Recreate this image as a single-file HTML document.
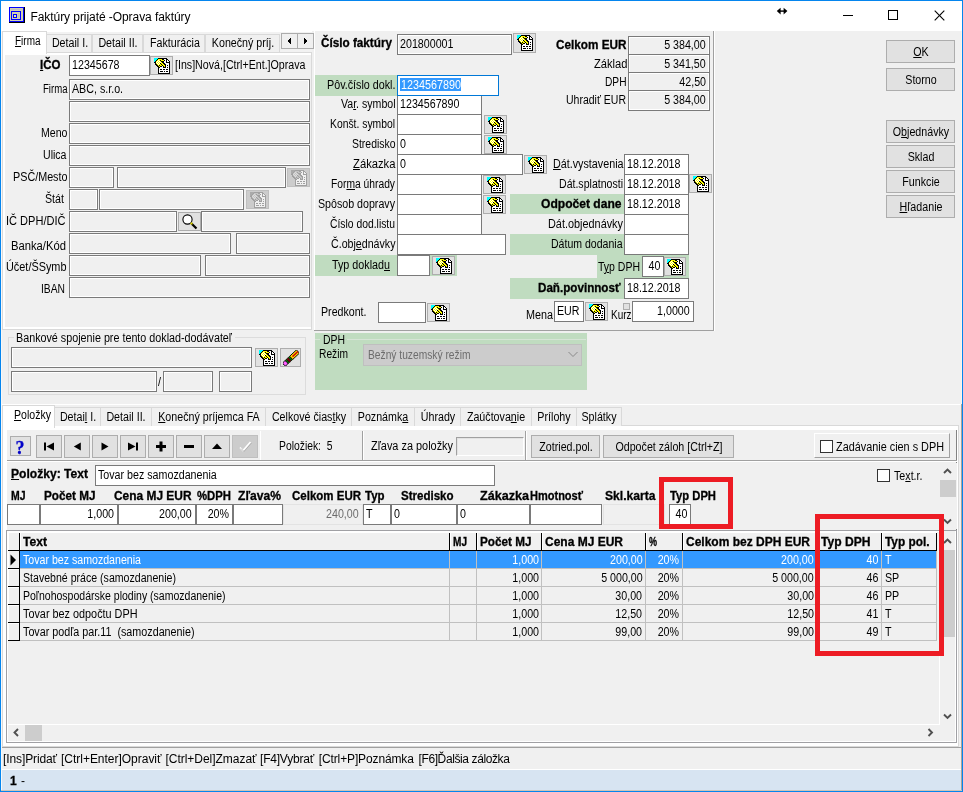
<!DOCTYPE html>
<html lang="sk"><head><meta charset="utf-8"><title>Faktúry prijaté - Oprava faktúry</title>
<style>
html,body{margin:0;padding:0;}
body{width:963px;height:792px;overflow:hidden;position:relative;background:#f0f0f0;font-family:"Liberation Sans", sans-serif;font-size:12px;color:#000;}
#w{position:absolute;left:0;top:0;width:963px;height:792px;overflow:hidden;will-change:transform;}
#w div,#w svg,#w span{position:absolute;}
.t{white-space:pre;}
u{text-decoration:underline;text-underline-offset:1px;text-decoration-thickness:1px;}
</style></head>
<body><div id="w">
<div style="left:0px;top:0px;width:963px;height:792px;background:#f0f0f0;"></div>
<div style="left:0px;top:0px;width:963px;height:31px;background:#fff;"></div>
<svg style="left:9px;top:7px" width="16" height="16" viewBox="0 0 16 16" shape-rendering="crispEdges"><rect x="0" y="0" width="16" height="16" fill="#000"/><rect x="0" y="0" width="15" height="15" fill="#0000ff"/><rect x="1" y="1" width="13" height="13" fill="#d2d2b0"/><rect x="2" y="2" width="11" height="1" fill="#c0c0c0"/><rect x="2" y="4" width="10" height="9" fill="#0000ff"/><rect x="3" y="5" width="8" height="7" fill="#d2d2b0"/><rect x="9" y="6" width="1" height="5" fill="#c0c0c0"/><rect x="4" y="7" width="4" height="4" fill="#0000ff"/><rect x="5" y="8" width="2" height="2" fill="#f0f0a0"/></svg>
<span id="t1" class="t" style="top:10px;line-height:14px;left:30.5px;letter-spacing:-0.067px;">Faktúry prijaté -Oprava faktúry</span>
<svg style="left:770px;top:0px" width="190" height="31" viewBox="0 0 190 31"><g stroke="#000" stroke-width="1" fill="none" shape-rendering="crispEdges"><line x1="73" y1="15.5" x2="83" y2="15.5"/><rect x="118.5" y="10.5" width="9" height="9"/></g><g stroke="#000" stroke-width="1.1" fill="none"><line x1="164.7" y1="10.7" x2="174.3" y2="20.3"/><line x1="174.3" y1="10.7" x2="164.7" y2="20.3"/></g><g fill="#000"><rect x="9" y="10.4" width="7" height="1.4"/><path d="M6.8 11.1 L10.6 7.8 L10.6 14.4 Z"/><path d="M17.4 11.1 L13.6 7.8 L13.6 14.4 Z"/></g></svg>
<div style="left:2px;top:31px;width:311px;height:299px;background:#fff;"></div>
<div style="left:46px;top:32px;width:268px;height:20px;background:#f2f2f2;"></div>
<div style="left:2px;top:329px;width:310px;height:1px;background:#d9d9d9;"></div>
<div style="left:311px;top:52px;width:1px;height:278px;background:#d9d9d9;"></div>
<div style="left:46px;top:52px;width:266px;height:1px;background:#d9d9d9;"></div>
<div style="left:2px;top:31px;width:1px;height:299px;background:#d9d9d9;"></div>
<div style="left:312px;top:31px;width:2px;height:300px;background:#f0f0f0;"></div>
<div style="left:46px;top:34px;width:46px;height:18px;background:#f0f0f0;border:1px solid #d9d9d9;border-bottom:none;box-sizing:border-box;"></div>
<span id="t2" class="t" style="top:36px;line-height:14px;left:-80.5px;width:300px;text-align:center;transform:scaleX(0.8900);transform-origin:center center;">Detail I.</span>
<div style="left:92px;top:34px;width:51px;height:18px;background:#f0f0f0;border:1px solid #d9d9d9;border-bottom:none;box-sizing:border-box;"></div>
<span id="t3" class="t" style="top:36px;line-height:14px;left:-32.0px;width:300px;text-align:center;transform:scaleX(0.8900);transform-origin:center center;">Detail II.</span>
<div style="left:143px;top:34px;width:62px;height:18px;background:#f0f0f0;border:1px solid #d9d9d9;border-bottom:none;box-sizing:border-box;"></div>
<span id="t4" class="t" style="top:36px;line-height:14px;left:24.5px;width:300px;text-align:center;transform:scaleX(0.8900);transform-origin:center center;">Fakturácia</span>
<div style="left:205px;top:34px;width:75px;height:18px;background:#f0f0f0;border:1px solid #d9d9d9;border-bottom:none;box-sizing:border-box;"></div>
<span id="t5" class="t" style="top:36px;line-height:14px;left:93.0px;width:300px;text-align:center;transform:scaleX(0.8900);transform-origin:center center;">Konečný príj.</span>
<div style="left:2px;top:31px;width:45px;height:23px;background:#fff;border:1px solid #d9d9d9;border-bottom:none;box-sizing:border-box;"></div>
<span id="t6" class="t" style="top:34px;line-height:14px;left:15px;transform:scaleX(0.8310);transform-origin:left center;"><u>F</u>irma</span>
<div style="left:281px;top:33px;width:15px;height:14px;background:#f0f0f0;border:1px solid #adadad"></div>
<div style="left:297px;top:33px;width:15px;height:14px;background:#f0f0f0;border:1px solid #adadad"></div>
<svg style="left:281px;top:33px" width="33" height="16" viewBox="0 0 33 16" shape-rendering="crispEdges"><path d="M9.5 4.5 L9.5 11.5 L6 8 Z" fill="#000"/><path d="M22.5 4.5 L22.5 11.5 L26 8 Z" fill="#000"/></svg>
<div style="left:5px;top:55px;width:306px;height:272px;background:#f0f0f0;"></div>
<span id="t7" class="t" style="top:58px;line-height:14px;font-weight:bold;-webkit-text-stroke:0.3px;left:40px;transform:scaleX(0.9605);transform-origin:left center;"><u>I</u>ČO</span>
<div style="left:69px;top:55px;width:79px;height:19px;background:#fff;border:1px solid #7a7a7a"></div>
<span id="t8" class="t" style="top:58px;line-height:14px;left:72px;transform:scaleX(0.8900);transform-origin:left center;">12345678</span>
<div style="left:150px;top:56px;width:21px;height:17px;background:#e1e1e1;border:1px solid #adadad"></div>
<svg style="left:154px;top:58px" width="16" height="16" viewBox="0 0 16 16" shape-rendering="crispEdges"><rect x="0" y="0" width="4" height="1" fill="#00ffff"/><rect x="4" y="0" width="9" height="1" fill="#000"/><rect x="0" y="1" width="3" height="1" fill="#00ffff"/><rect x="3" y="1" width="1" height="1" fill="#000"/><rect x="4" y="1" width="4" height="1" fill="#ffff00"/><rect x="8" y="1" width="2" height="1" fill="#000"/><rect x="10" y="1" width="2" height="1" fill="#fff"/><rect x="12" y="1" width="2" height="1" fill="#000"/><rect x="0" y="2" width="2" height="1" fill="#00ffff"/><rect x="2" y="2" width="1" height="1" fill="#000"/><rect x="3" y="2" width="1" height="1" fill="#ffff00"/><rect x="4" y="2" width="1" height="1" fill="#ffffff"/><rect x="5" y="2" width="1" height="1" fill="#ffff00"/><rect x="6" y="2" width="1" height="1" fill="#000"/><rect x="7" y="2" width="3" height="1" fill="#ffff00"/><rect x="10" y="2" width="1" height="1" fill="#000"/><rect x="11" y="2" width="1" height="1" fill="#fff"/><rect x="12" y="2" width="1" height="1" fill="#000"/><rect x="13" y="2" width="1" height="1" fill="#fff"/><rect x="14" y="2" width="1" height="1" fill="#000"/><rect x="0" y="3" width="1" height="1" fill="#00ffff"/><rect x="1" y="3" width="1" height="1" fill="#000"/><rect x="2" y="3" width="1" height="1" fill="#ffff00"/><rect x="3" y="3" width="1" height="1" fill="#ffffff"/><rect x="4" y="3" width="1" height="1" fill="#ffff00"/><rect x="5" y="3" width="1" height="1" fill="#ffffff"/><rect x="6" y="3" width="1" height="1" fill="#ffff00"/><rect x="7" y="3" width="3" height="1" fill="#000"/><rect x="10" y="3" width="2" height="1" fill="#fff"/><rect x="12" y="3" width="1" height="1" fill="#000"/><rect x="13" y="3" width="2" height="1" fill="#fff"/><rect x="15" y="3" width="1" height="1" fill="#000"/><rect x="0" y="4" width="2" height="1" fill="#000"/><rect x="2" y="4" width="1" height="1" fill="#ffffff"/><rect x="3" y="4" width="1" height="1" fill="#ffff00"/><rect x="4" y="4" width="1" height="1" fill="#ffffff"/><rect x="5" y="4" width="1" height="1" fill="#ffff00"/><rect x="6" y="4" width="1" height="1" fill="#ffffff"/><rect x="7" y="4" width="1" height="1" fill="#ffff00"/><rect x="8" y="4" width="2" height="1" fill="#000"/><rect x="10" y="4" width="2" height="1" fill="#fff"/><rect x="12" y="4" width="4" height="1" fill="#000"/><rect x="1" y="5" width="1" height="1" fill="#000"/><rect x="2" y="5" width="1" height="1" fill="#ffff00"/><rect x="3" y="5" width="1" height="1" fill="#ffffff"/><rect x="4" y="5" width="1" height="1" fill="#ffff00"/><rect x="5" y="5" width="1" height="1" fill="#ffffff"/><rect x="6" y="5" width="1" height="1" fill="#000"/><rect x="7" y="5" width="2" height="1" fill="#ffff00"/><rect x="9" y="5" width="2" height="1" fill="#000"/><rect x="11" y="5" width="4" height="1" fill="#fff"/><rect x="15" y="5" width="1" height="1" fill="#000"/><rect x="1" y="6" width="2" height="1" fill="#000"/><rect x="3" y="6" width="1" height="1" fill="#ffff00"/><rect x="4" y="6" width="1" height="1" fill="#ffffff"/><rect x="5" y="6" width="2" height="1" fill="#ffff00"/><rect x="7" y="6" width="1" height="1" fill="#000"/><rect x="8" y="6" width="2" height="1" fill="#ffff00"/><rect x="10" y="6" width="2" height="1" fill="#000"/><rect x="12" y="6" width="3" height="1" fill="#fff"/><rect x="15" y="6" width="1" height="1" fill="#000"/><rect x="2" y="7" width="2" height="1" fill="#000"/><rect x="4" y="7" width="1" height="1" fill="#ffff00"/><rect x="5" y="7" width="1" height="1" fill="#000"/><rect x="6" y="7" width="2" height="1" fill="#ffff00"/><rect x="8" y="7" width="1" height="1" fill="#000"/><rect x="9" y="7" width="2" height="1" fill="#ffff00"/><rect x="11" y="7" width="1" height="1" fill="#000"/><rect x="12" y="7" width="1" height="1" fill="#fff"/><rect x="13" y="7" width="1" height="1" fill="#000"/><rect x="14" y="7" width="1" height="1" fill="#fff"/><rect x="15" y="7" width="1" height="1" fill="#000"/><rect x="3" y="8" width="2" height="1" fill="#000"/><rect x="5" y="8" width="1" height="1" fill="#ffff00"/><rect x="6" y="8" width="2" height="1" fill="#000"/><rect x="8" y="8" width="1" height="1" fill="#fff"/><rect x="9" y="8" width="1" height="1" fill="#000"/><rect x="10" y="8" width="1" height="1" fill="#ffff00"/><rect x="11" y="8" width="1" height="1" fill="#000"/><rect x="12" y="8" width="3" height="1" fill="#fff"/><rect x="15" y="8" width="1" height="1" fill="#000"/><rect x="4" y="9" width="2" height="1" fill="#000"/><rect x="6" y="9" width="3" height="1" fill="#fff"/><rect x="9" y="9" width="3" height="1" fill="#000"/><rect x="12" y="9" width="1" height="1" fill="#fff"/><rect x="13" y="9" width="1" height="1" fill="#000"/><rect x="14" y="9" width="1" height="1" fill="#fff"/><rect x="15" y="9" width="1" height="1" fill="#000"/><rect x="4" y="10" width="1" height="1" fill="#000"/><rect x="5" y="10" width="10" height="1" fill="#fff"/><rect x="15" y="10" width="1" height="1" fill="#000"/><rect x="4" y="11" width="1" height="1" fill="#000"/><rect x="5" y="11" width="1" height="1" fill="#fff"/><rect x="6" y="11" width="2" height="1" fill="#000"/><rect x="8" y="11" width="1" height="1" fill="#fff"/><rect x="9" y="11" width="2" height="1" fill="#000"/><rect x="11" y="11" width="1" height="1" fill="#fff"/><rect x="12" y="11" width="2" height="1" fill="#000"/><rect x="14" y="11" width="1" height="1" fill="#fff"/><rect x="15" y="11" width="1" height="1" fill="#000"/><rect x="4" y="12" width="1" height="1" fill="#000"/><rect x="5" y="12" width="10" height="1" fill="#fff"/><rect x="15" y="12" width="1" height="1" fill="#000"/><rect x="4" y="13" width="1" height="1" fill="#000"/><rect x="5" y="13" width="1" height="1" fill="#fff"/><rect x="6" y="13" width="3" height="1" fill="#000"/><rect x="9" y="13" width="1" height="1" fill="#fff"/><rect x="10" y="13" width="1" height="1" fill="#000"/><rect x="11" y="13" width="1" height="1" fill="#fff"/><rect x="12" y="13" width="2" height="1" fill="#000"/><rect x="14" y="13" width="1" height="1" fill="#fff"/><rect x="15" y="13" width="1" height="1" fill="#000"/><rect x="4" y="14" width="1" height="1" fill="#000"/><rect x="5" y="14" width="10" height="1" fill="#fff"/><rect x="15" y="14" width="1" height="1" fill="#000"/><rect x="4" y="15" width="12" height="1" fill="#000"/></svg>
<span id="t9" class="t" style="top:58px;line-height:14px;left:175px;transform:scaleX(0.8874);transform-origin:left center;">[Ins]Nová,[Ctrl+Ent.]Oprava</span>
<div style="left:69px;top:79px;width:239px;height:19px;background:#f0f0f0;border:1px solid #7a7a7a;box-shadow:inset 0 0 0 1px #fff;"></div>
<span id="t10" class="t" style="top:82px;line-height:14px;left:72px;transform:scaleX(0.8900);transform-origin:left center;">ABC, s.r.o.</span>
<span id="t11" class="t" style="top:82px;line-height:14px;left:42.5px;transform:scaleX(0.7988);transform-origin:left center;">Firma</span>
<div style="left:69px;top:101px;width:239px;height:19px;background:#f0f0f0;border:1px solid #7a7a7a;box-shadow:inset 0 0 0 1px #fff;"></div>
<div style="left:69px;top:123px;width:239px;height:19px;background:#f0f0f0;border:1px solid #7a7a7a;box-shadow:inset 0 0 0 1px #fff;"></div>
<span id="t12" class="t" style="top:126px;line-height:14px;left:40.5px;transform:scaleX(0.8824);transform-origin:left center;">Meno</span>
<div style="left:69px;top:145px;width:239px;height:19px;background:#f0f0f0;border:1px solid #7a7a7a;box-shadow:inset 0 0 0 1px #fff;"></div>
<span id="t13" class="t" style="top:148px;line-height:14px;left:42.5px;transform:scaleX(0.8811);transform-origin:left center;">Ulica</span>
<span id="t14" class="t" style="top:170px;line-height:14px;left:12.5px;transform:scaleX(0.8980);transform-origin:left center;">PSČ/Mesto</span>
<div style="left:69px;top:167px;width:43px;height:19px;background:#f0f0f0;border:1px solid #7a7a7a;box-shadow:inset 0 0 0 1px #fff;"></div>
<div style="left:117px;top:167px;width:167px;height:19px;background:#f0f0f0;border:1px solid #7a7a7a;box-shadow:inset 0 0 0 1px #fff;"></div>
<div style="left:287px;top:168px;width:21px;height:17px;background:#cccccc;border:1px solid #bfbfbf"></div>
<svg style="left:291px;top:170px" width="16" height="16" viewBox="0 0 16 16" shape-rendering="crispEdges"><rect x="0" y="0" width="4" height="1" fill="#aaaaaa"/><rect x="4" y="0" width="9" height="1" fill="#a0a0a0"/><rect x="0" y="1" width="3" height="1" fill="#aaaaaa"/><rect x="3" y="1" width="1" height="1" fill="#a0a0a0"/><rect x="4" y="1" width="4" height="1" fill="#c4c4c4"/><rect x="8" y="1" width="2" height="1" fill="#a0a0a0"/><rect x="10" y="1" width="2" height="1" fill="#f0f0f0"/><rect x="12" y="1" width="2" height="1" fill="#a0a0a0"/><rect x="0" y="2" width="2" height="1" fill="#aaaaaa"/><rect x="2" y="2" width="1" height="1" fill="#a0a0a0"/><rect x="3" y="2" width="1" height="1" fill="#c4c4c4"/><rect x="4" y="2" width="1" height="1" fill="#dcdcdc"/><rect x="5" y="2" width="1" height="1" fill="#c4c4c4"/><rect x="6" y="2" width="1" height="1" fill="#a0a0a0"/><rect x="7" y="2" width="3" height="1" fill="#c4c4c4"/><rect x="10" y="2" width="1" height="1" fill="#a0a0a0"/><rect x="11" y="2" width="1" height="1" fill="#f0f0f0"/><rect x="12" y="2" width="1" height="1" fill="#a0a0a0"/><rect x="13" y="2" width="1" height="1" fill="#f0f0f0"/><rect x="14" y="2" width="1" height="1" fill="#a0a0a0"/><rect x="0" y="3" width="1" height="1" fill="#aaaaaa"/><rect x="1" y="3" width="1" height="1" fill="#a0a0a0"/><rect x="2" y="3" width="1" height="1" fill="#c4c4c4"/><rect x="3" y="3" width="1" height="1" fill="#dcdcdc"/><rect x="4" y="3" width="1" height="1" fill="#c4c4c4"/><rect x="5" y="3" width="1" height="1" fill="#dcdcdc"/><rect x="6" y="3" width="1" height="1" fill="#c4c4c4"/><rect x="7" y="3" width="3" height="1" fill="#a0a0a0"/><rect x="10" y="3" width="2" height="1" fill="#f0f0f0"/><rect x="12" y="3" width="1" height="1" fill="#a0a0a0"/><rect x="13" y="3" width="2" height="1" fill="#f0f0f0"/><rect x="15" y="3" width="1" height="1" fill="#a0a0a0"/><rect x="0" y="4" width="2" height="1" fill="#a0a0a0"/><rect x="2" y="4" width="1" height="1" fill="#dcdcdc"/><rect x="3" y="4" width="1" height="1" fill="#c4c4c4"/><rect x="4" y="4" width="1" height="1" fill="#dcdcdc"/><rect x="5" y="4" width="1" height="1" fill="#c4c4c4"/><rect x="6" y="4" width="1" height="1" fill="#dcdcdc"/><rect x="7" y="4" width="1" height="1" fill="#c4c4c4"/><rect x="8" y="4" width="2" height="1" fill="#a0a0a0"/><rect x="10" y="4" width="2" height="1" fill="#f0f0f0"/><rect x="12" y="4" width="4" height="1" fill="#a0a0a0"/><rect x="1" y="5" width="1" height="1" fill="#a0a0a0"/><rect x="2" y="5" width="1" height="1" fill="#c4c4c4"/><rect x="3" y="5" width="1" height="1" fill="#dcdcdc"/><rect x="4" y="5" width="1" height="1" fill="#c4c4c4"/><rect x="5" y="5" width="1" height="1" fill="#dcdcdc"/><rect x="6" y="5" width="1" height="1" fill="#a0a0a0"/><rect x="7" y="5" width="2" height="1" fill="#c4c4c4"/><rect x="9" y="5" width="2" height="1" fill="#a0a0a0"/><rect x="11" y="5" width="4" height="1" fill="#f0f0f0"/><rect x="15" y="5" width="1" height="1" fill="#a0a0a0"/><rect x="1" y="6" width="2" height="1" fill="#a0a0a0"/><rect x="3" y="6" width="1" height="1" fill="#c4c4c4"/><rect x="4" y="6" width="1" height="1" fill="#dcdcdc"/><rect x="5" y="6" width="2" height="1" fill="#c4c4c4"/><rect x="7" y="6" width="1" height="1" fill="#a0a0a0"/><rect x="8" y="6" width="2" height="1" fill="#c4c4c4"/><rect x="10" y="6" width="2" height="1" fill="#a0a0a0"/><rect x="12" y="6" width="3" height="1" fill="#f0f0f0"/><rect x="15" y="6" width="1" height="1" fill="#a0a0a0"/><rect x="2" y="7" width="2" height="1" fill="#a0a0a0"/><rect x="4" y="7" width="1" height="1" fill="#c4c4c4"/><rect x="5" y="7" width="1" height="1" fill="#a0a0a0"/><rect x="6" y="7" width="2" height="1" fill="#c4c4c4"/><rect x="8" y="7" width="1" height="1" fill="#a0a0a0"/><rect x="9" y="7" width="2" height="1" fill="#c4c4c4"/><rect x="11" y="7" width="1" height="1" fill="#a0a0a0"/><rect x="12" y="7" width="1" height="1" fill="#f0f0f0"/><rect x="13" y="7" width="1" height="1" fill="#a0a0a0"/><rect x="14" y="7" width="1" height="1" fill="#f0f0f0"/><rect x="15" y="7" width="1" height="1" fill="#a0a0a0"/><rect x="3" y="8" width="2" height="1" fill="#a0a0a0"/><rect x="5" y="8" width="1" height="1" fill="#c4c4c4"/><rect x="6" y="8" width="2" height="1" fill="#a0a0a0"/><rect x="8" y="8" width="1" height="1" fill="#f0f0f0"/><rect x="9" y="8" width="1" height="1" fill="#a0a0a0"/><rect x="10" y="8" width="1" height="1" fill="#c4c4c4"/><rect x="11" y="8" width="1" height="1" fill="#a0a0a0"/><rect x="12" y="8" width="3" height="1" fill="#f0f0f0"/><rect x="15" y="8" width="1" height="1" fill="#a0a0a0"/><rect x="4" y="9" width="2" height="1" fill="#a0a0a0"/><rect x="6" y="9" width="3" height="1" fill="#f0f0f0"/><rect x="9" y="9" width="3" height="1" fill="#a0a0a0"/><rect x="12" y="9" width="1" height="1" fill="#f0f0f0"/><rect x="13" y="9" width="1" height="1" fill="#a0a0a0"/><rect x="14" y="9" width="1" height="1" fill="#f0f0f0"/><rect x="15" y="9" width="1" height="1" fill="#a0a0a0"/><rect x="4" y="10" width="1" height="1" fill="#a0a0a0"/><rect x="5" y="10" width="10" height="1" fill="#f0f0f0"/><rect x="15" y="10" width="1" height="1" fill="#a0a0a0"/><rect x="4" y="11" width="1" height="1" fill="#a0a0a0"/><rect x="5" y="11" width="1" height="1" fill="#f0f0f0"/><rect x="6" y="11" width="2" height="1" fill="#a0a0a0"/><rect x="8" y="11" width="1" height="1" fill="#f0f0f0"/><rect x="9" y="11" width="2" height="1" fill="#a0a0a0"/><rect x="11" y="11" width="1" height="1" fill="#f0f0f0"/><rect x="12" y="11" width="2" height="1" fill="#a0a0a0"/><rect x="14" y="11" width="1" height="1" fill="#f0f0f0"/><rect x="15" y="11" width="1" height="1" fill="#a0a0a0"/><rect x="4" y="12" width="1" height="1" fill="#a0a0a0"/><rect x="5" y="12" width="10" height="1" fill="#f0f0f0"/><rect x="15" y="12" width="1" height="1" fill="#a0a0a0"/><rect x="4" y="13" width="1" height="1" fill="#a0a0a0"/><rect x="5" y="13" width="1" height="1" fill="#f0f0f0"/><rect x="6" y="13" width="3" height="1" fill="#a0a0a0"/><rect x="9" y="13" width="1" height="1" fill="#f0f0f0"/><rect x="10" y="13" width="1" height="1" fill="#a0a0a0"/><rect x="11" y="13" width="1" height="1" fill="#f0f0f0"/><rect x="12" y="13" width="2" height="1" fill="#a0a0a0"/><rect x="14" y="13" width="1" height="1" fill="#f0f0f0"/><rect x="15" y="13" width="1" height="1" fill="#a0a0a0"/><rect x="4" y="14" width="1" height="1" fill="#a0a0a0"/><rect x="5" y="14" width="10" height="1" fill="#f0f0f0"/><rect x="15" y="14" width="1" height="1" fill="#a0a0a0"/><rect x="4" y="15" width="12" height="1" fill="#a0a0a0"/></svg>
<span id="t15" class="t" style="top:192px;line-height:14px;left:45px;transform:scaleX(0.8895);transform-origin:left center;">Štát</span>
<div style="left:69px;top:189px;width:27px;height:19px;background:#f0f0f0;border:1px solid #7a7a7a;box-shadow:inset 0 0 0 1px #fff;"></div>
<div style="left:99px;top:189px;width:143px;height:19px;background:#f0f0f0;border:1px solid #7a7a7a;box-shadow:inset 0 0 0 1px #fff;"></div>
<div style="left:246px;top:190px;width:21px;height:17px;background:#cccccc;border:1px solid #bfbfbf"></div>
<svg style="left:250px;top:192px" width="16" height="16" viewBox="0 0 16 16" shape-rendering="crispEdges"><rect x="0" y="0" width="4" height="1" fill="#aaaaaa"/><rect x="4" y="0" width="9" height="1" fill="#a0a0a0"/><rect x="0" y="1" width="3" height="1" fill="#aaaaaa"/><rect x="3" y="1" width="1" height="1" fill="#a0a0a0"/><rect x="4" y="1" width="4" height="1" fill="#c4c4c4"/><rect x="8" y="1" width="2" height="1" fill="#a0a0a0"/><rect x="10" y="1" width="2" height="1" fill="#f0f0f0"/><rect x="12" y="1" width="2" height="1" fill="#a0a0a0"/><rect x="0" y="2" width="2" height="1" fill="#aaaaaa"/><rect x="2" y="2" width="1" height="1" fill="#a0a0a0"/><rect x="3" y="2" width="1" height="1" fill="#c4c4c4"/><rect x="4" y="2" width="1" height="1" fill="#dcdcdc"/><rect x="5" y="2" width="1" height="1" fill="#c4c4c4"/><rect x="6" y="2" width="1" height="1" fill="#a0a0a0"/><rect x="7" y="2" width="3" height="1" fill="#c4c4c4"/><rect x="10" y="2" width="1" height="1" fill="#a0a0a0"/><rect x="11" y="2" width="1" height="1" fill="#f0f0f0"/><rect x="12" y="2" width="1" height="1" fill="#a0a0a0"/><rect x="13" y="2" width="1" height="1" fill="#f0f0f0"/><rect x="14" y="2" width="1" height="1" fill="#a0a0a0"/><rect x="0" y="3" width="1" height="1" fill="#aaaaaa"/><rect x="1" y="3" width="1" height="1" fill="#a0a0a0"/><rect x="2" y="3" width="1" height="1" fill="#c4c4c4"/><rect x="3" y="3" width="1" height="1" fill="#dcdcdc"/><rect x="4" y="3" width="1" height="1" fill="#c4c4c4"/><rect x="5" y="3" width="1" height="1" fill="#dcdcdc"/><rect x="6" y="3" width="1" height="1" fill="#c4c4c4"/><rect x="7" y="3" width="3" height="1" fill="#a0a0a0"/><rect x="10" y="3" width="2" height="1" fill="#f0f0f0"/><rect x="12" y="3" width="1" height="1" fill="#a0a0a0"/><rect x="13" y="3" width="2" height="1" fill="#f0f0f0"/><rect x="15" y="3" width="1" height="1" fill="#a0a0a0"/><rect x="0" y="4" width="2" height="1" fill="#a0a0a0"/><rect x="2" y="4" width="1" height="1" fill="#dcdcdc"/><rect x="3" y="4" width="1" height="1" fill="#c4c4c4"/><rect x="4" y="4" width="1" height="1" fill="#dcdcdc"/><rect x="5" y="4" width="1" height="1" fill="#c4c4c4"/><rect x="6" y="4" width="1" height="1" fill="#dcdcdc"/><rect x="7" y="4" width="1" height="1" fill="#c4c4c4"/><rect x="8" y="4" width="2" height="1" fill="#a0a0a0"/><rect x="10" y="4" width="2" height="1" fill="#f0f0f0"/><rect x="12" y="4" width="4" height="1" fill="#a0a0a0"/><rect x="1" y="5" width="1" height="1" fill="#a0a0a0"/><rect x="2" y="5" width="1" height="1" fill="#c4c4c4"/><rect x="3" y="5" width="1" height="1" fill="#dcdcdc"/><rect x="4" y="5" width="1" height="1" fill="#c4c4c4"/><rect x="5" y="5" width="1" height="1" fill="#dcdcdc"/><rect x="6" y="5" width="1" height="1" fill="#a0a0a0"/><rect x="7" y="5" width="2" height="1" fill="#c4c4c4"/><rect x="9" y="5" width="2" height="1" fill="#a0a0a0"/><rect x="11" y="5" width="4" height="1" fill="#f0f0f0"/><rect x="15" y="5" width="1" height="1" fill="#a0a0a0"/><rect x="1" y="6" width="2" height="1" fill="#a0a0a0"/><rect x="3" y="6" width="1" height="1" fill="#c4c4c4"/><rect x="4" y="6" width="1" height="1" fill="#dcdcdc"/><rect x="5" y="6" width="2" height="1" fill="#c4c4c4"/><rect x="7" y="6" width="1" height="1" fill="#a0a0a0"/><rect x="8" y="6" width="2" height="1" fill="#c4c4c4"/><rect x="10" y="6" width="2" height="1" fill="#a0a0a0"/><rect x="12" y="6" width="3" height="1" fill="#f0f0f0"/><rect x="15" y="6" width="1" height="1" fill="#a0a0a0"/><rect x="2" y="7" width="2" height="1" fill="#a0a0a0"/><rect x="4" y="7" width="1" height="1" fill="#c4c4c4"/><rect x="5" y="7" width="1" height="1" fill="#a0a0a0"/><rect x="6" y="7" width="2" height="1" fill="#c4c4c4"/><rect x="8" y="7" width="1" height="1" fill="#a0a0a0"/><rect x="9" y="7" width="2" height="1" fill="#c4c4c4"/><rect x="11" y="7" width="1" height="1" fill="#a0a0a0"/><rect x="12" y="7" width="1" height="1" fill="#f0f0f0"/><rect x="13" y="7" width="1" height="1" fill="#a0a0a0"/><rect x="14" y="7" width="1" height="1" fill="#f0f0f0"/><rect x="15" y="7" width="1" height="1" fill="#a0a0a0"/><rect x="3" y="8" width="2" height="1" fill="#a0a0a0"/><rect x="5" y="8" width="1" height="1" fill="#c4c4c4"/><rect x="6" y="8" width="2" height="1" fill="#a0a0a0"/><rect x="8" y="8" width="1" height="1" fill="#f0f0f0"/><rect x="9" y="8" width="1" height="1" fill="#a0a0a0"/><rect x="10" y="8" width="1" height="1" fill="#c4c4c4"/><rect x="11" y="8" width="1" height="1" fill="#a0a0a0"/><rect x="12" y="8" width="3" height="1" fill="#f0f0f0"/><rect x="15" y="8" width="1" height="1" fill="#a0a0a0"/><rect x="4" y="9" width="2" height="1" fill="#a0a0a0"/><rect x="6" y="9" width="3" height="1" fill="#f0f0f0"/><rect x="9" y="9" width="3" height="1" fill="#a0a0a0"/><rect x="12" y="9" width="1" height="1" fill="#f0f0f0"/><rect x="13" y="9" width="1" height="1" fill="#a0a0a0"/><rect x="14" y="9" width="1" height="1" fill="#f0f0f0"/><rect x="15" y="9" width="1" height="1" fill="#a0a0a0"/><rect x="4" y="10" width="1" height="1" fill="#a0a0a0"/><rect x="5" y="10" width="10" height="1" fill="#f0f0f0"/><rect x="15" y="10" width="1" height="1" fill="#a0a0a0"/><rect x="4" y="11" width="1" height="1" fill="#a0a0a0"/><rect x="5" y="11" width="1" height="1" fill="#f0f0f0"/><rect x="6" y="11" width="2" height="1" fill="#a0a0a0"/><rect x="8" y="11" width="1" height="1" fill="#f0f0f0"/><rect x="9" y="11" width="2" height="1" fill="#a0a0a0"/><rect x="11" y="11" width="1" height="1" fill="#f0f0f0"/><rect x="12" y="11" width="2" height="1" fill="#a0a0a0"/><rect x="14" y="11" width="1" height="1" fill="#f0f0f0"/><rect x="15" y="11" width="1" height="1" fill="#a0a0a0"/><rect x="4" y="12" width="1" height="1" fill="#a0a0a0"/><rect x="5" y="12" width="10" height="1" fill="#f0f0f0"/><rect x="15" y="12" width="1" height="1" fill="#a0a0a0"/><rect x="4" y="13" width="1" height="1" fill="#a0a0a0"/><rect x="5" y="13" width="1" height="1" fill="#f0f0f0"/><rect x="6" y="13" width="3" height="1" fill="#a0a0a0"/><rect x="9" y="13" width="1" height="1" fill="#f0f0f0"/><rect x="10" y="13" width="1" height="1" fill="#a0a0a0"/><rect x="11" y="13" width="1" height="1" fill="#f0f0f0"/><rect x="12" y="13" width="2" height="1" fill="#a0a0a0"/><rect x="14" y="13" width="1" height="1" fill="#f0f0f0"/><rect x="15" y="13" width="1" height="1" fill="#a0a0a0"/><rect x="4" y="14" width="1" height="1" fill="#a0a0a0"/><rect x="5" y="14" width="10" height="1" fill="#f0f0f0"/><rect x="15" y="14" width="1" height="1" fill="#a0a0a0"/><rect x="4" y="15" width="12" height="1" fill="#a0a0a0"/></svg>
<span id="t16" class="t" style="top:214px;line-height:14px;left:6px;transform:scaleX(0.9200);transform-origin:left center;">IČ DPH/DIČ</span>
<div style="left:69px;top:211px;width:106px;height:19px;background:#f0f0f0;border:1px solid #7a7a7a;box-shadow:inset 0 0 0 1px #fff;"></div>
<div style="left:201px;top:211px;width:100px;height:19px;background:#f0f0f0;border:1px solid #7a7a7a;box-shadow:inset 0 0 0 1px #fff;"></div>
<div style="left:178px;top:212px;width:21px;height:17px;background:#e1e1e1;border:1px solid #adadad"></div>
<svg style="left:181px;top:213px" width="18" height="18" viewBox="0 0 18 18"><circle cx="6.5" cy="6.5" r="4.6" fill="#fff" stroke="#000" stroke-width="1.1"/><line x1="10.5" y1="10.5" x2="15.5" y2="15.5" stroke="#000" stroke-width="2.2"/><rect x="9.5" y="9.5" width="2" height="2" fill="#e8e000"/></svg>
<span id="t17" class="t" style="top:239px;line-height:14px;left:10.5px;transform:scaleX(0.9367);transform-origin:left center;">Banka/Kód</span>
<div style="left:69px;top:233px;width:160px;height:19px;background:#f0f0f0;border:1px solid #7a7a7a;box-shadow:inset 0 0 0 1px #fff;"></div>
<div style="left:236px;top:233px;width:72px;height:19px;background:#f0f0f0;border:1px solid #7a7a7a;box-shadow:inset 0 0 0 1px #fff;"></div>
<span id="t18" class="t" style="top:260px;line-height:14px;left:5.5px;transform:scaleX(0.9072);transform-origin:left center;">Účet/ŠSymb</span>
<div style="left:69px;top:255px;width:130px;height:19px;background:#f0f0f0;border:1px solid #7a7a7a;box-shadow:inset 0 0 0 1px #fff;"></div>
<div style="left:205px;top:255px;width:103px;height:19px;background:#f0f0f0;border:1px solid #7a7a7a;box-shadow:inset 0 0 0 1px #fff;"></div>
<span id="t19" class="t" style="top:282px;line-height:14px;left:40.5px;transform:scaleX(0.8567);transform-origin:left center;">IBAN</span>
<div style="left:69px;top:277px;width:239px;height:19px;background:#f0f0f0;border:1px solid #7a7a7a;box-shadow:inset 0 0 0 1px #fff;"></div>
<div style="left:8px;top:337px;width:298px;height:58px;border:1px solid #dcdcdc;box-sizing:border-box"></div>
<div style="left:14px;top:332px;width:221px;height:12px;background:#f0f0f0;"></div>
<span id="t20" class="t" style="top:331px;line-height:14px;left:16px;transform:scaleX(0.8962);transform-origin:left center;">Bankové spojenie pre tento doklad-dodávateľ</span>
<div style="left:11px;top:347px;width:239px;height:19px;background:#f0f0f0;border:1px solid #7a7a7a;box-shadow:inset 0 0 0 1px #fff;"></div>
<div style="left:255px;top:348px;width:21px;height:17px;background:#e1e1e1;border:1px solid #adadad"></div>
<svg style="left:259px;top:350px" width="16" height="16" viewBox="0 0 16 16" shape-rendering="crispEdges"><rect x="0" y="0" width="4" height="1" fill="#00ffff"/><rect x="4" y="0" width="9" height="1" fill="#000"/><rect x="0" y="1" width="3" height="1" fill="#00ffff"/><rect x="3" y="1" width="1" height="1" fill="#000"/><rect x="4" y="1" width="4" height="1" fill="#ffff00"/><rect x="8" y="1" width="2" height="1" fill="#000"/><rect x="10" y="1" width="2" height="1" fill="#fff"/><rect x="12" y="1" width="2" height="1" fill="#000"/><rect x="0" y="2" width="2" height="1" fill="#00ffff"/><rect x="2" y="2" width="1" height="1" fill="#000"/><rect x="3" y="2" width="1" height="1" fill="#ffff00"/><rect x="4" y="2" width="1" height="1" fill="#ffffff"/><rect x="5" y="2" width="1" height="1" fill="#ffff00"/><rect x="6" y="2" width="1" height="1" fill="#000"/><rect x="7" y="2" width="3" height="1" fill="#ffff00"/><rect x="10" y="2" width="1" height="1" fill="#000"/><rect x="11" y="2" width="1" height="1" fill="#fff"/><rect x="12" y="2" width="1" height="1" fill="#000"/><rect x="13" y="2" width="1" height="1" fill="#fff"/><rect x="14" y="2" width="1" height="1" fill="#000"/><rect x="0" y="3" width="1" height="1" fill="#00ffff"/><rect x="1" y="3" width="1" height="1" fill="#000"/><rect x="2" y="3" width="1" height="1" fill="#ffff00"/><rect x="3" y="3" width="1" height="1" fill="#ffffff"/><rect x="4" y="3" width="1" height="1" fill="#ffff00"/><rect x="5" y="3" width="1" height="1" fill="#ffffff"/><rect x="6" y="3" width="1" height="1" fill="#ffff00"/><rect x="7" y="3" width="3" height="1" fill="#000"/><rect x="10" y="3" width="2" height="1" fill="#fff"/><rect x="12" y="3" width="1" height="1" fill="#000"/><rect x="13" y="3" width="2" height="1" fill="#fff"/><rect x="15" y="3" width="1" height="1" fill="#000"/><rect x="0" y="4" width="2" height="1" fill="#000"/><rect x="2" y="4" width="1" height="1" fill="#ffffff"/><rect x="3" y="4" width="1" height="1" fill="#ffff00"/><rect x="4" y="4" width="1" height="1" fill="#ffffff"/><rect x="5" y="4" width="1" height="1" fill="#ffff00"/><rect x="6" y="4" width="1" height="1" fill="#ffffff"/><rect x="7" y="4" width="1" height="1" fill="#ffff00"/><rect x="8" y="4" width="2" height="1" fill="#000"/><rect x="10" y="4" width="2" height="1" fill="#fff"/><rect x="12" y="4" width="4" height="1" fill="#000"/><rect x="1" y="5" width="1" height="1" fill="#000"/><rect x="2" y="5" width="1" height="1" fill="#ffff00"/><rect x="3" y="5" width="1" height="1" fill="#ffffff"/><rect x="4" y="5" width="1" height="1" fill="#ffff00"/><rect x="5" y="5" width="1" height="1" fill="#ffffff"/><rect x="6" y="5" width="1" height="1" fill="#000"/><rect x="7" y="5" width="2" height="1" fill="#ffff00"/><rect x="9" y="5" width="2" height="1" fill="#000"/><rect x="11" y="5" width="4" height="1" fill="#fff"/><rect x="15" y="5" width="1" height="1" fill="#000"/><rect x="1" y="6" width="2" height="1" fill="#000"/><rect x="3" y="6" width="1" height="1" fill="#ffff00"/><rect x="4" y="6" width="1" height="1" fill="#ffffff"/><rect x="5" y="6" width="2" height="1" fill="#ffff00"/><rect x="7" y="6" width="1" height="1" fill="#000"/><rect x="8" y="6" width="2" height="1" fill="#ffff00"/><rect x="10" y="6" width="2" height="1" fill="#000"/><rect x="12" y="6" width="3" height="1" fill="#fff"/><rect x="15" y="6" width="1" height="1" fill="#000"/><rect x="2" y="7" width="2" height="1" fill="#000"/><rect x="4" y="7" width="1" height="1" fill="#ffff00"/><rect x="5" y="7" width="1" height="1" fill="#000"/><rect x="6" y="7" width="2" height="1" fill="#ffff00"/><rect x="8" y="7" width="1" height="1" fill="#000"/><rect x="9" y="7" width="2" height="1" fill="#ffff00"/><rect x="11" y="7" width="1" height="1" fill="#000"/><rect x="12" y="7" width="1" height="1" fill="#fff"/><rect x="13" y="7" width="1" height="1" fill="#000"/><rect x="14" y="7" width="1" height="1" fill="#fff"/><rect x="15" y="7" width="1" height="1" fill="#000"/><rect x="3" y="8" width="2" height="1" fill="#000"/><rect x="5" y="8" width="1" height="1" fill="#ffff00"/><rect x="6" y="8" width="2" height="1" fill="#000"/><rect x="8" y="8" width="1" height="1" fill="#fff"/><rect x="9" y="8" width="1" height="1" fill="#000"/><rect x="10" y="8" width="1" height="1" fill="#ffff00"/><rect x="11" y="8" width="1" height="1" fill="#000"/><rect x="12" y="8" width="3" height="1" fill="#fff"/><rect x="15" y="8" width="1" height="1" fill="#000"/><rect x="4" y="9" width="2" height="1" fill="#000"/><rect x="6" y="9" width="3" height="1" fill="#fff"/><rect x="9" y="9" width="3" height="1" fill="#000"/><rect x="12" y="9" width="1" height="1" fill="#fff"/><rect x="13" y="9" width="1" height="1" fill="#000"/><rect x="14" y="9" width="1" height="1" fill="#fff"/><rect x="15" y="9" width="1" height="1" fill="#000"/><rect x="4" y="10" width="1" height="1" fill="#000"/><rect x="5" y="10" width="10" height="1" fill="#fff"/><rect x="15" y="10" width="1" height="1" fill="#000"/><rect x="4" y="11" width="1" height="1" fill="#000"/><rect x="5" y="11" width="1" height="1" fill="#fff"/><rect x="6" y="11" width="2" height="1" fill="#000"/><rect x="8" y="11" width="1" height="1" fill="#fff"/><rect x="9" y="11" width="2" height="1" fill="#000"/><rect x="11" y="11" width="1" height="1" fill="#fff"/><rect x="12" y="11" width="2" height="1" fill="#000"/><rect x="14" y="11" width="1" height="1" fill="#fff"/><rect x="15" y="11" width="1" height="1" fill="#000"/><rect x="4" y="12" width="1" height="1" fill="#000"/><rect x="5" y="12" width="10" height="1" fill="#fff"/><rect x="15" y="12" width="1" height="1" fill="#000"/><rect x="4" y="13" width="1" height="1" fill="#000"/><rect x="5" y="13" width="1" height="1" fill="#fff"/><rect x="6" y="13" width="3" height="1" fill="#000"/><rect x="9" y="13" width="1" height="1" fill="#fff"/><rect x="10" y="13" width="1" height="1" fill="#000"/><rect x="11" y="13" width="1" height="1" fill="#fff"/><rect x="12" y="13" width="2" height="1" fill="#000"/><rect x="14" y="13" width="1" height="1" fill="#fff"/><rect x="15" y="13" width="1" height="1" fill="#000"/><rect x="4" y="14" width="1" height="1" fill="#000"/><rect x="5" y="14" width="10" height="1" fill="#fff"/><rect x="15" y="14" width="1" height="1" fill="#000"/><rect x="4" y="15" width="12" height="1" fill="#000"/></svg>
<div style="left:280px;top:348px;width:19px;height:17px;background:#e1e1e1;border:1px solid #adadad"></div>
<svg style="left:283px;top:350px" width="16" height="16" viewBox="0 0 16 16"><g transform="rotate(-43 8 8)"><rect x="-1.8" y="5.8" width="4" height="4.4" rx="1.2" fill="#ff60ff" stroke="#000" stroke-width="0.9"/><rect x="2.2" y="5.8" width="1.8" height="4.4" fill="#008000" stroke="#000" stroke-width="0.6"/><rect x="4" y="5.8" width="2.4" height="4.4" fill="#800000" stroke="#000" stroke-width="0.6"/><rect x="6.4" y="5.8" width="1.8" height="4.4" fill="#008000" stroke="#000" stroke-width="0.6"/><rect x="8.2" y="5.8" width="9.3" height="4.4" fill="#ffe000" stroke="#000" stroke-width="0.9"/><rect x="10" y="7.3" width="7.5" height="1.4" fill="#d00000"/></g></svg>
<div style="left:11px;top:371px;width:144px;height:19px;background:#f0f0f0;border:1px solid #7a7a7a;box-shadow:inset 0 0 0 1px #fff;"></div>
<span id="t21" class="t" style="top:375px;line-height:14px;left:157.5px;transform:scaleX(0.8900);transform-origin:left center;">/</span>
<div style="left:163px;top:371px;width:48px;height:19px;background:#f0f0f0;border:1px solid #7a7a7a;box-shadow:inset 0 0 0 1px #fff;"></div>
<div style="left:219px;top:371px;width:31px;height:19px;background:#f0f0f0;border:1px solid #7a7a7a;box-shadow:inset 0 0 0 1px #fff;"></div>
<div style="left:314px;top:31px;width:1px;height:300px;background:#fff;"></div>
<div style="left:713px;top:31px;width:1px;height:300px;background:#a0a0a0;"></div>
<div style="left:314px;top:330px;width:400px;height:1px;background:#a0a0a0;"></div>
<div style="left:714px;top:31px;width:1px;height:300px;background:#fff;"></div>
<span id="t22" class="t" style="top:36px;line-height:14px;font-weight:bold;-webkit-text-stroke:0.3px;left:320.5px;transform:scaleX(0.9768);transform-origin:left center;">Číslo faktúry</span>
<div style="left:397px;top:34px;width:113px;height:19px;background:#f0f0f0;border:1px solid #7a7a7a;box-shadow:inset 0 0 0 1px #fff;"></div>
<span id="t23" class="t" style="top:37px;line-height:14px;left:400px;transform:scaleX(0.8900);transform-origin:left center;">201800001</span>
<div style="left:513px;top:33px;width:21px;height:18px;background:#e1e1e1;border:1px solid #adadad"></div>
<svg style="left:517px;top:35px" width="16" height="16" viewBox="0 0 16 16" shape-rendering="crispEdges"><rect x="0" y="0" width="4" height="1" fill="#00ffff"/><rect x="4" y="0" width="9" height="1" fill="#000"/><rect x="0" y="1" width="3" height="1" fill="#00ffff"/><rect x="3" y="1" width="1" height="1" fill="#000"/><rect x="4" y="1" width="4" height="1" fill="#ffff00"/><rect x="8" y="1" width="2" height="1" fill="#000"/><rect x="10" y="1" width="2" height="1" fill="#fff"/><rect x="12" y="1" width="2" height="1" fill="#000"/><rect x="0" y="2" width="2" height="1" fill="#00ffff"/><rect x="2" y="2" width="1" height="1" fill="#000"/><rect x="3" y="2" width="1" height="1" fill="#ffff00"/><rect x="4" y="2" width="1" height="1" fill="#ffffff"/><rect x="5" y="2" width="1" height="1" fill="#ffff00"/><rect x="6" y="2" width="1" height="1" fill="#000"/><rect x="7" y="2" width="3" height="1" fill="#ffff00"/><rect x="10" y="2" width="1" height="1" fill="#000"/><rect x="11" y="2" width="1" height="1" fill="#fff"/><rect x="12" y="2" width="1" height="1" fill="#000"/><rect x="13" y="2" width="1" height="1" fill="#fff"/><rect x="14" y="2" width="1" height="1" fill="#000"/><rect x="0" y="3" width="1" height="1" fill="#00ffff"/><rect x="1" y="3" width="1" height="1" fill="#000"/><rect x="2" y="3" width="1" height="1" fill="#ffff00"/><rect x="3" y="3" width="1" height="1" fill="#ffffff"/><rect x="4" y="3" width="1" height="1" fill="#ffff00"/><rect x="5" y="3" width="1" height="1" fill="#ffffff"/><rect x="6" y="3" width="1" height="1" fill="#ffff00"/><rect x="7" y="3" width="3" height="1" fill="#000"/><rect x="10" y="3" width="2" height="1" fill="#fff"/><rect x="12" y="3" width="1" height="1" fill="#000"/><rect x="13" y="3" width="2" height="1" fill="#fff"/><rect x="15" y="3" width="1" height="1" fill="#000"/><rect x="0" y="4" width="2" height="1" fill="#000"/><rect x="2" y="4" width="1" height="1" fill="#ffffff"/><rect x="3" y="4" width="1" height="1" fill="#ffff00"/><rect x="4" y="4" width="1" height="1" fill="#ffffff"/><rect x="5" y="4" width="1" height="1" fill="#ffff00"/><rect x="6" y="4" width="1" height="1" fill="#ffffff"/><rect x="7" y="4" width="1" height="1" fill="#ffff00"/><rect x="8" y="4" width="2" height="1" fill="#000"/><rect x="10" y="4" width="2" height="1" fill="#fff"/><rect x="12" y="4" width="4" height="1" fill="#000"/><rect x="1" y="5" width="1" height="1" fill="#000"/><rect x="2" y="5" width="1" height="1" fill="#ffff00"/><rect x="3" y="5" width="1" height="1" fill="#ffffff"/><rect x="4" y="5" width="1" height="1" fill="#ffff00"/><rect x="5" y="5" width="1" height="1" fill="#ffffff"/><rect x="6" y="5" width="1" height="1" fill="#000"/><rect x="7" y="5" width="2" height="1" fill="#ffff00"/><rect x="9" y="5" width="2" height="1" fill="#000"/><rect x="11" y="5" width="4" height="1" fill="#fff"/><rect x="15" y="5" width="1" height="1" fill="#000"/><rect x="1" y="6" width="2" height="1" fill="#000"/><rect x="3" y="6" width="1" height="1" fill="#ffff00"/><rect x="4" y="6" width="1" height="1" fill="#ffffff"/><rect x="5" y="6" width="2" height="1" fill="#ffff00"/><rect x="7" y="6" width="1" height="1" fill="#000"/><rect x="8" y="6" width="2" height="1" fill="#ffff00"/><rect x="10" y="6" width="2" height="1" fill="#000"/><rect x="12" y="6" width="3" height="1" fill="#fff"/><rect x="15" y="6" width="1" height="1" fill="#000"/><rect x="2" y="7" width="2" height="1" fill="#000"/><rect x="4" y="7" width="1" height="1" fill="#ffff00"/><rect x="5" y="7" width="1" height="1" fill="#000"/><rect x="6" y="7" width="2" height="1" fill="#ffff00"/><rect x="8" y="7" width="1" height="1" fill="#000"/><rect x="9" y="7" width="2" height="1" fill="#ffff00"/><rect x="11" y="7" width="1" height="1" fill="#000"/><rect x="12" y="7" width="1" height="1" fill="#fff"/><rect x="13" y="7" width="1" height="1" fill="#000"/><rect x="14" y="7" width="1" height="1" fill="#fff"/><rect x="15" y="7" width="1" height="1" fill="#000"/><rect x="3" y="8" width="2" height="1" fill="#000"/><rect x="5" y="8" width="1" height="1" fill="#ffff00"/><rect x="6" y="8" width="2" height="1" fill="#000"/><rect x="8" y="8" width="1" height="1" fill="#fff"/><rect x="9" y="8" width="1" height="1" fill="#000"/><rect x="10" y="8" width="1" height="1" fill="#ffff00"/><rect x="11" y="8" width="1" height="1" fill="#000"/><rect x="12" y="8" width="3" height="1" fill="#fff"/><rect x="15" y="8" width="1" height="1" fill="#000"/><rect x="4" y="9" width="2" height="1" fill="#000"/><rect x="6" y="9" width="3" height="1" fill="#fff"/><rect x="9" y="9" width="3" height="1" fill="#000"/><rect x="12" y="9" width="1" height="1" fill="#fff"/><rect x="13" y="9" width="1" height="1" fill="#000"/><rect x="14" y="9" width="1" height="1" fill="#fff"/><rect x="15" y="9" width="1" height="1" fill="#000"/><rect x="4" y="10" width="1" height="1" fill="#000"/><rect x="5" y="10" width="10" height="1" fill="#fff"/><rect x="15" y="10" width="1" height="1" fill="#000"/><rect x="4" y="11" width="1" height="1" fill="#000"/><rect x="5" y="11" width="1" height="1" fill="#fff"/><rect x="6" y="11" width="2" height="1" fill="#000"/><rect x="8" y="11" width="1" height="1" fill="#fff"/><rect x="9" y="11" width="2" height="1" fill="#000"/><rect x="11" y="11" width="1" height="1" fill="#fff"/><rect x="12" y="11" width="2" height="1" fill="#000"/><rect x="14" y="11" width="1" height="1" fill="#fff"/><rect x="15" y="11" width="1" height="1" fill="#000"/><rect x="4" y="12" width="1" height="1" fill="#000"/><rect x="5" y="12" width="10" height="1" fill="#fff"/><rect x="15" y="12" width="1" height="1" fill="#000"/><rect x="4" y="13" width="1" height="1" fill="#000"/><rect x="5" y="13" width="1" height="1" fill="#fff"/><rect x="6" y="13" width="3" height="1" fill="#000"/><rect x="9" y="13" width="1" height="1" fill="#fff"/><rect x="10" y="13" width="1" height="1" fill="#000"/><rect x="11" y="13" width="1" height="1" fill="#fff"/><rect x="12" y="13" width="2" height="1" fill="#000"/><rect x="14" y="13" width="1" height="1" fill="#fff"/><rect x="15" y="13" width="1" height="1" fill="#000"/><rect x="4" y="14" width="1" height="1" fill="#000"/><rect x="5" y="14" width="10" height="1" fill="#fff"/><rect x="15" y="14" width="1" height="1" fill="#000"/><rect x="4" y="15" width="12" height="1" fill="#000"/></svg>
<span id="t24" class="t" style="top:38px;line-height:14px;font-weight:bold;-webkit-text-stroke:0.3px;left:556px;transform:scaleX(0.9787);transform-origin:left center;">Celkom EUR</span>
<span id="t25" class="t" style="top:57px;line-height:14px;left:593.5px;transform:scaleX(0.9297);transform-origin:left center;">Základ</span>
<span id="t26" class="t" style="top:75px;line-height:14px;left:604.5px;transform:scaleX(0.8483);transform-origin:left center;">DPH</span>
<span id="t27" class="t" style="top:93px;line-height:14px;left:566px;transform:scaleX(0.8755);transform-origin:left center;">Uhradiť EUR</span>
<div style="left:628px;top:36px;width:80px;height:18px;background:#f0f0f0;border:1px solid #7a7a7a;box-shadow:inset 0 0 0 1px #fff;"></div>
<div style="left:628px;top:54px;width:80px;height:18px;background:#f0f0f0;border:1px solid #7a7a7a;box-shadow:inset 0 0 0 1px #fff;"></div>
<div style="left:628px;top:72px;width:80px;height:18px;background:#f0f0f0;border:1px solid #7a7a7a;box-shadow:inset 0 0 0 1px #fff;"></div>
<div style="left:628px;top:90px;width:80px;height:19px;background:#f0f0f0;border:1px solid #7a7a7a;box-shadow:inset 0 0 0 1px #fff;"></div>
<span id="t28" class="t" style="top:38px;line-height:14px;right:257px;transform:scaleX(0.8900);transform-origin:right center;">5 384,00</span>
<span id="t29" class="t" style="top:57px;line-height:14px;right:257px;transform:scaleX(0.8900);transform-origin:right center;">5 341,50</span>
<span id="t30" class="t" style="top:75px;line-height:14px;right:257px;transform:scaleX(0.8900);transform-origin:right center;">42,50</span>
<span id="t31" class="t" style="top:93px;line-height:14px;right:257px;transform:scaleX(0.8900);transform-origin:right center;">5 384,00</span>
<div style="left:315px;top:75px;width:82px;height:21px;background:#c0dcc0;"></div>
<span id="t32" class="t" style="top:78px;line-height:14px;left:326.5px;transform:scaleX(0.8956);transform-origin:left center;">Pôv.číslo dokl.</span>
<span id="t33" class="t" style="top:97px;line-height:14px;left:340.5px;transform:scaleX(0.8815);transform-origin:left center;">Va<u>r</u>. symbol</span>
<span id="t34" class="t" style="top:117px;line-height:14px;left:330px;transform:scaleX(0.8624);transform-origin:left center;">Konšt. symbol</span>
<span id="t35" class="t" style="top:137px;line-height:14px;left:351.5px;transform:scaleX(0.8695);transform-origin:left center;">Stredisko</span>
<span id="t36" class="t" style="top:157px;line-height:14px;left:352.5px;transform:scaleX(0.9366);transform-origin:left center;"><u>Z</u>ákazka</span>
<span id="t37" class="t" style="top:177px;line-height:14px;left:331px;transform:scaleX(0.8567);transform-origin:left center;">For<u>m</u>a úhrady</span>
<span id="t38" class="t" style="top:197px;line-height:14px;left:318px;transform:scaleX(0.8878);transform-origin:left center;">Spôsob dopravy</span>
<span id="t39" class="t" style="top:217px;line-height:14px;left:330px;transform:scaleX(0.8624);transform-origin:left center;">Číslo dod.listu</span>
<span id="t40" class="t" style="top:237px;line-height:14px;left:330.5px;transform:scaleX(0.8868);transform-origin:left center;">Č.obj<u>e</u>dnávky</span>
<div style="left:397px;top:94px;width:83px;height:19px;background:#fff;border:1px solid #7a7a7a"></div>
<span id="t41" class="t" style="top:97px;line-height:14px;left:400px;transform:scaleX(0.8900);transform-origin:left center;">1234567890</span>
<div style="left:397px;top:114px;width:83px;height:19px;background:#fff;border:1px solid #7a7a7a"></div>
<div style="left:484px;top:115px;width:21px;height:17px;background:#e1e1e1;border:1px solid #adadad"></div>
<svg style="left:488px;top:117px" width="16" height="16" viewBox="0 0 16 16" shape-rendering="crispEdges"><rect x="0" y="0" width="4" height="1" fill="#00ffff"/><rect x="4" y="0" width="9" height="1" fill="#000"/><rect x="0" y="1" width="3" height="1" fill="#00ffff"/><rect x="3" y="1" width="1" height="1" fill="#000"/><rect x="4" y="1" width="4" height="1" fill="#ffff00"/><rect x="8" y="1" width="2" height="1" fill="#000"/><rect x="10" y="1" width="2" height="1" fill="#fff"/><rect x="12" y="1" width="2" height="1" fill="#000"/><rect x="0" y="2" width="2" height="1" fill="#00ffff"/><rect x="2" y="2" width="1" height="1" fill="#000"/><rect x="3" y="2" width="1" height="1" fill="#ffff00"/><rect x="4" y="2" width="1" height="1" fill="#ffffff"/><rect x="5" y="2" width="1" height="1" fill="#ffff00"/><rect x="6" y="2" width="1" height="1" fill="#000"/><rect x="7" y="2" width="3" height="1" fill="#ffff00"/><rect x="10" y="2" width="1" height="1" fill="#000"/><rect x="11" y="2" width="1" height="1" fill="#fff"/><rect x="12" y="2" width="1" height="1" fill="#000"/><rect x="13" y="2" width="1" height="1" fill="#fff"/><rect x="14" y="2" width="1" height="1" fill="#000"/><rect x="0" y="3" width="1" height="1" fill="#00ffff"/><rect x="1" y="3" width="1" height="1" fill="#000"/><rect x="2" y="3" width="1" height="1" fill="#ffff00"/><rect x="3" y="3" width="1" height="1" fill="#ffffff"/><rect x="4" y="3" width="1" height="1" fill="#ffff00"/><rect x="5" y="3" width="1" height="1" fill="#ffffff"/><rect x="6" y="3" width="1" height="1" fill="#ffff00"/><rect x="7" y="3" width="3" height="1" fill="#000"/><rect x="10" y="3" width="2" height="1" fill="#fff"/><rect x="12" y="3" width="1" height="1" fill="#000"/><rect x="13" y="3" width="2" height="1" fill="#fff"/><rect x="15" y="3" width="1" height="1" fill="#000"/><rect x="0" y="4" width="2" height="1" fill="#000"/><rect x="2" y="4" width="1" height="1" fill="#ffffff"/><rect x="3" y="4" width="1" height="1" fill="#ffff00"/><rect x="4" y="4" width="1" height="1" fill="#ffffff"/><rect x="5" y="4" width="1" height="1" fill="#ffff00"/><rect x="6" y="4" width="1" height="1" fill="#ffffff"/><rect x="7" y="4" width="1" height="1" fill="#ffff00"/><rect x="8" y="4" width="2" height="1" fill="#000"/><rect x="10" y="4" width="2" height="1" fill="#fff"/><rect x="12" y="4" width="4" height="1" fill="#000"/><rect x="1" y="5" width="1" height="1" fill="#000"/><rect x="2" y="5" width="1" height="1" fill="#ffff00"/><rect x="3" y="5" width="1" height="1" fill="#ffffff"/><rect x="4" y="5" width="1" height="1" fill="#ffff00"/><rect x="5" y="5" width="1" height="1" fill="#ffffff"/><rect x="6" y="5" width="1" height="1" fill="#000"/><rect x="7" y="5" width="2" height="1" fill="#ffff00"/><rect x="9" y="5" width="2" height="1" fill="#000"/><rect x="11" y="5" width="4" height="1" fill="#fff"/><rect x="15" y="5" width="1" height="1" fill="#000"/><rect x="1" y="6" width="2" height="1" fill="#000"/><rect x="3" y="6" width="1" height="1" fill="#ffff00"/><rect x="4" y="6" width="1" height="1" fill="#ffffff"/><rect x="5" y="6" width="2" height="1" fill="#ffff00"/><rect x="7" y="6" width="1" height="1" fill="#000"/><rect x="8" y="6" width="2" height="1" fill="#ffff00"/><rect x="10" y="6" width="2" height="1" fill="#000"/><rect x="12" y="6" width="3" height="1" fill="#fff"/><rect x="15" y="6" width="1" height="1" fill="#000"/><rect x="2" y="7" width="2" height="1" fill="#000"/><rect x="4" y="7" width="1" height="1" fill="#ffff00"/><rect x="5" y="7" width="1" height="1" fill="#000"/><rect x="6" y="7" width="2" height="1" fill="#ffff00"/><rect x="8" y="7" width="1" height="1" fill="#000"/><rect x="9" y="7" width="2" height="1" fill="#ffff00"/><rect x="11" y="7" width="1" height="1" fill="#000"/><rect x="12" y="7" width="1" height="1" fill="#fff"/><rect x="13" y="7" width="1" height="1" fill="#000"/><rect x="14" y="7" width="1" height="1" fill="#fff"/><rect x="15" y="7" width="1" height="1" fill="#000"/><rect x="3" y="8" width="2" height="1" fill="#000"/><rect x="5" y="8" width="1" height="1" fill="#ffff00"/><rect x="6" y="8" width="2" height="1" fill="#000"/><rect x="8" y="8" width="1" height="1" fill="#fff"/><rect x="9" y="8" width="1" height="1" fill="#000"/><rect x="10" y="8" width="1" height="1" fill="#ffff00"/><rect x="11" y="8" width="1" height="1" fill="#000"/><rect x="12" y="8" width="3" height="1" fill="#fff"/><rect x="15" y="8" width="1" height="1" fill="#000"/><rect x="4" y="9" width="2" height="1" fill="#000"/><rect x="6" y="9" width="3" height="1" fill="#fff"/><rect x="9" y="9" width="3" height="1" fill="#000"/><rect x="12" y="9" width="1" height="1" fill="#fff"/><rect x="13" y="9" width="1" height="1" fill="#000"/><rect x="14" y="9" width="1" height="1" fill="#fff"/><rect x="15" y="9" width="1" height="1" fill="#000"/><rect x="4" y="10" width="1" height="1" fill="#000"/><rect x="5" y="10" width="10" height="1" fill="#fff"/><rect x="15" y="10" width="1" height="1" fill="#000"/><rect x="4" y="11" width="1" height="1" fill="#000"/><rect x="5" y="11" width="1" height="1" fill="#fff"/><rect x="6" y="11" width="2" height="1" fill="#000"/><rect x="8" y="11" width="1" height="1" fill="#fff"/><rect x="9" y="11" width="2" height="1" fill="#000"/><rect x="11" y="11" width="1" height="1" fill="#fff"/><rect x="12" y="11" width="2" height="1" fill="#000"/><rect x="14" y="11" width="1" height="1" fill="#fff"/><rect x="15" y="11" width="1" height="1" fill="#000"/><rect x="4" y="12" width="1" height="1" fill="#000"/><rect x="5" y="12" width="10" height="1" fill="#fff"/><rect x="15" y="12" width="1" height="1" fill="#000"/><rect x="4" y="13" width="1" height="1" fill="#000"/><rect x="5" y="13" width="1" height="1" fill="#fff"/><rect x="6" y="13" width="3" height="1" fill="#000"/><rect x="9" y="13" width="1" height="1" fill="#fff"/><rect x="10" y="13" width="1" height="1" fill="#000"/><rect x="11" y="13" width="1" height="1" fill="#fff"/><rect x="12" y="13" width="2" height="1" fill="#000"/><rect x="14" y="13" width="1" height="1" fill="#fff"/><rect x="15" y="13" width="1" height="1" fill="#000"/><rect x="4" y="14" width="1" height="1" fill="#000"/><rect x="5" y="14" width="10" height="1" fill="#fff"/><rect x="15" y="14" width="1" height="1" fill="#000"/><rect x="4" y="15" width="12" height="1" fill="#000"/></svg>
<div style="left:397px;top:134px;width:83px;height:19px;background:#fff;border:1px solid #7a7a7a"></div>
<span id="t42" class="t" style="top:137px;line-height:14px;left:400px;transform:scaleX(0.8900);transform-origin:left center;">0</span>
<div style="left:484px;top:135px;width:21px;height:17px;background:#e1e1e1;border:1px solid #adadad"></div>
<svg style="left:488px;top:137px" width="16" height="16" viewBox="0 0 16 16" shape-rendering="crispEdges"><rect x="0" y="0" width="4" height="1" fill="#00ffff"/><rect x="4" y="0" width="9" height="1" fill="#000"/><rect x="0" y="1" width="3" height="1" fill="#00ffff"/><rect x="3" y="1" width="1" height="1" fill="#000"/><rect x="4" y="1" width="4" height="1" fill="#ffff00"/><rect x="8" y="1" width="2" height="1" fill="#000"/><rect x="10" y="1" width="2" height="1" fill="#fff"/><rect x="12" y="1" width="2" height="1" fill="#000"/><rect x="0" y="2" width="2" height="1" fill="#00ffff"/><rect x="2" y="2" width="1" height="1" fill="#000"/><rect x="3" y="2" width="1" height="1" fill="#ffff00"/><rect x="4" y="2" width="1" height="1" fill="#ffffff"/><rect x="5" y="2" width="1" height="1" fill="#ffff00"/><rect x="6" y="2" width="1" height="1" fill="#000"/><rect x="7" y="2" width="3" height="1" fill="#ffff00"/><rect x="10" y="2" width="1" height="1" fill="#000"/><rect x="11" y="2" width="1" height="1" fill="#fff"/><rect x="12" y="2" width="1" height="1" fill="#000"/><rect x="13" y="2" width="1" height="1" fill="#fff"/><rect x="14" y="2" width="1" height="1" fill="#000"/><rect x="0" y="3" width="1" height="1" fill="#00ffff"/><rect x="1" y="3" width="1" height="1" fill="#000"/><rect x="2" y="3" width="1" height="1" fill="#ffff00"/><rect x="3" y="3" width="1" height="1" fill="#ffffff"/><rect x="4" y="3" width="1" height="1" fill="#ffff00"/><rect x="5" y="3" width="1" height="1" fill="#ffffff"/><rect x="6" y="3" width="1" height="1" fill="#ffff00"/><rect x="7" y="3" width="3" height="1" fill="#000"/><rect x="10" y="3" width="2" height="1" fill="#fff"/><rect x="12" y="3" width="1" height="1" fill="#000"/><rect x="13" y="3" width="2" height="1" fill="#fff"/><rect x="15" y="3" width="1" height="1" fill="#000"/><rect x="0" y="4" width="2" height="1" fill="#000"/><rect x="2" y="4" width="1" height="1" fill="#ffffff"/><rect x="3" y="4" width="1" height="1" fill="#ffff00"/><rect x="4" y="4" width="1" height="1" fill="#ffffff"/><rect x="5" y="4" width="1" height="1" fill="#ffff00"/><rect x="6" y="4" width="1" height="1" fill="#ffffff"/><rect x="7" y="4" width="1" height="1" fill="#ffff00"/><rect x="8" y="4" width="2" height="1" fill="#000"/><rect x="10" y="4" width="2" height="1" fill="#fff"/><rect x="12" y="4" width="4" height="1" fill="#000"/><rect x="1" y="5" width="1" height="1" fill="#000"/><rect x="2" y="5" width="1" height="1" fill="#ffff00"/><rect x="3" y="5" width="1" height="1" fill="#ffffff"/><rect x="4" y="5" width="1" height="1" fill="#ffff00"/><rect x="5" y="5" width="1" height="1" fill="#ffffff"/><rect x="6" y="5" width="1" height="1" fill="#000"/><rect x="7" y="5" width="2" height="1" fill="#ffff00"/><rect x="9" y="5" width="2" height="1" fill="#000"/><rect x="11" y="5" width="4" height="1" fill="#fff"/><rect x="15" y="5" width="1" height="1" fill="#000"/><rect x="1" y="6" width="2" height="1" fill="#000"/><rect x="3" y="6" width="1" height="1" fill="#ffff00"/><rect x="4" y="6" width="1" height="1" fill="#ffffff"/><rect x="5" y="6" width="2" height="1" fill="#ffff00"/><rect x="7" y="6" width="1" height="1" fill="#000"/><rect x="8" y="6" width="2" height="1" fill="#ffff00"/><rect x="10" y="6" width="2" height="1" fill="#000"/><rect x="12" y="6" width="3" height="1" fill="#fff"/><rect x="15" y="6" width="1" height="1" fill="#000"/><rect x="2" y="7" width="2" height="1" fill="#000"/><rect x="4" y="7" width="1" height="1" fill="#ffff00"/><rect x="5" y="7" width="1" height="1" fill="#000"/><rect x="6" y="7" width="2" height="1" fill="#ffff00"/><rect x="8" y="7" width="1" height="1" fill="#000"/><rect x="9" y="7" width="2" height="1" fill="#ffff00"/><rect x="11" y="7" width="1" height="1" fill="#000"/><rect x="12" y="7" width="1" height="1" fill="#fff"/><rect x="13" y="7" width="1" height="1" fill="#000"/><rect x="14" y="7" width="1" height="1" fill="#fff"/><rect x="15" y="7" width="1" height="1" fill="#000"/><rect x="3" y="8" width="2" height="1" fill="#000"/><rect x="5" y="8" width="1" height="1" fill="#ffff00"/><rect x="6" y="8" width="2" height="1" fill="#000"/><rect x="8" y="8" width="1" height="1" fill="#fff"/><rect x="9" y="8" width="1" height="1" fill="#000"/><rect x="10" y="8" width="1" height="1" fill="#ffff00"/><rect x="11" y="8" width="1" height="1" fill="#000"/><rect x="12" y="8" width="3" height="1" fill="#fff"/><rect x="15" y="8" width="1" height="1" fill="#000"/><rect x="4" y="9" width="2" height="1" fill="#000"/><rect x="6" y="9" width="3" height="1" fill="#fff"/><rect x="9" y="9" width="3" height="1" fill="#000"/><rect x="12" y="9" width="1" height="1" fill="#fff"/><rect x="13" y="9" width="1" height="1" fill="#000"/><rect x="14" y="9" width="1" height="1" fill="#fff"/><rect x="15" y="9" width="1" height="1" fill="#000"/><rect x="4" y="10" width="1" height="1" fill="#000"/><rect x="5" y="10" width="10" height="1" fill="#fff"/><rect x="15" y="10" width="1" height="1" fill="#000"/><rect x="4" y="11" width="1" height="1" fill="#000"/><rect x="5" y="11" width="1" height="1" fill="#fff"/><rect x="6" y="11" width="2" height="1" fill="#000"/><rect x="8" y="11" width="1" height="1" fill="#fff"/><rect x="9" y="11" width="2" height="1" fill="#000"/><rect x="11" y="11" width="1" height="1" fill="#fff"/><rect x="12" y="11" width="2" height="1" fill="#000"/><rect x="14" y="11" width="1" height="1" fill="#fff"/><rect x="15" y="11" width="1" height="1" fill="#000"/><rect x="4" y="12" width="1" height="1" fill="#000"/><rect x="5" y="12" width="10" height="1" fill="#fff"/><rect x="15" y="12" width="1" height="1" fill="#000"/><rect x="4" y="13" width="1" height="1" fill="#000"/><rect x="5" y="13" width="1" height="1" fill="#fff"/><rect x="6" y="13" width="3" height="1" fill="#000"/><rect x="9" y="13" width="1" height="1" fill="#fff"/><rect x="10" y="13" width="1" height="1" fill="#000"/><rect x="11" y="13" width="1" height="1" fill="#fff"/><rect x="12" y="13" width="2" height="1" fill="#000"/><rect x="14" y="13" width="1" height="1" fill="#fff"/><rect x="15" y="13" width="1" height="1" fill="#000"/><rect x="4" y="14" width="1" height="1" fill="#000"/><rect x="5" y="14" width="10" height="1" fill="#fff"/><rect x="15" y="14" width="1" height="1" fill="#000"/><rect x="4" y="15" width="12" height="1" fill="#000"/></svg>
<div style="left:397px;top:154px;width:124px;height:19px;background:#fff;border:1px solid #7a7a7a"></div>
<span id="t43" class="t" style="top:157px;line-height:14px;left:400px;transform:scaleX(0.8900);transform-origin:left center;">0</span>
<div style="left:524px;top:155px;width:21px;height:17px;background:#e1e1e1;border:1px solid #adadad"></div>
<svg style="left:528px;top:157px" width="16" height="16" viewBox="0 0 16 16" shape-rendering="crispEdges"><rect x="0" y="0" width="4" height="1" fill="#00ffff"/><rect x="4" y="0" width="9" height="1" fill="#000"/><rect x="0" y="1" width="3" height="1" fill="#00ffff"/><rect x="3" y="1" width="1" height="1" fill="#000"/><rect x="4" y="1" width="4" height="1" fill="#ffff00"/><rect x="8" y="1" width="2" height="1" fill="#000"/><rect x="10" y="1" width="2" height="1" fill="#fff"/><rect x="12" y="1" width="2" height="1" fill="#000"/><rect x="0" y="2" width="2" height="1" fill="#00ffff"/><rect x="2" y="2" width="1" height="1" fill="#000"/><rect x="3" y="2" width="1" height="1" fill="#ffff00"/><rect x="4" y="2" width="1" height="1" fill="#ffffff"/><rect x="5" y="2" width="1" height="1" fill="#ffff00"/><rect x="6" y="2" width="1" height="1" fill="#000"/><rect x="7" y="2" width="3" height="1" fill="#ffff00"/><rect x="10" y="2" width="1" height="1" fill="#000"/><rect x="11" y="2" width="1" height="1" fill="#fff"/><rect x="12" y="2" width="1" height="1" fill="#000"/><rect x="13" y="2" width="1" height="1" fill="#fff"/><rect x="14" y="2" width="1" height="1" fill="#000"/><rect x="0" y="3" width="1" height="1" fill="#00ffff"/><rect x="1" y="3" width="1" height="1" fill="#000"/><rect x="2" y="3" width="1" height="1" fill="#ffff00"/><rect x="3" y="3" width="1" height="1" fill="#ffffff"/><rect x="4" y="3" width="1" height="1" fill="#ffff00"/><rect x="5" y="3" width="1" height="1" fill="#ffffff"/><rect x="6" y="3" width="1" height="1" fill="#ffff00"/><rect x="7" y="3" width="3" height="1" fill="#000"/><rect x="10" y="3" width="2" height="1" fill="#fff"/><rect x="12" y="3" width="1" height="1" fill="#000"/><rect x="13" y="3" width="2" height="1" fill="#fff"/><rect x="15" y="3" width="1" height="1" fill="#000"/><rect x="0" y="4" width="2" height="1" fill="#000"/><rect x="2" y="4" width="1" height="1" fill="#ffffff"/><rect x="3" y="4" width="1" height="1" fill="#ffff00"/><rect x="4" y="4" width="1" height="1" fill="#ffffff"/><rect x="5" y="4" width="1" height="1" fill="#ffff00"/><rect x="6" y="4" width="1" height="1" fill="#ffffff"/><rect x="7" y="4" width="1" height="1" fill="#ffff00"/><rect x="8" y="4" width="2" height="1" fill="#000"/><rect x="10" y="4" width="2" height="1" fill="#fff"/><rect x="12" y="4" width="4" height="1" fill="#000"/><rect x="1" y="5" width="1" height="1" fill="#000"/><rect x="2" y="5" width="1" height="1" fill="#ffff00"/><rect x="3" y="5" width="1" height="1" fill="#ffffff"/><rect x="4" y="5" width="1" height="1" fill="#ffff00"/><rect x="5" y="5" width="1" height="1" fill="#ffffff"/><rect x="6" y="5" width="1" height="1" fill="#000"/><rect x="7" y="5" width="2" height="1" fill="#ffff00"/><rect x="9" y="5" width="2" height="1" fill="#000"/><rect x="11" y="5" width="4" height="1" fill="#fff"/><rect x="15" y="5" width="1" height="1" fill="#000"/><rect x="1" y="6" width="2" height="1" fill="#000"/><rect x="3" y="6" width="1" height="1" fill="#ffff00"/><rect x="4" y="6" width="1" height="1" fill="#ffffff"/><rect x="5" y="6" width="2" height="1" fill="#ffff00"/><rect x="7" y="6" width="1" height="1" fill="#000"/><rect x="8" y="6" width="2" height="1" fill="#ffff00"/><rect x="10" y="6" width="2" height="1" fill="#000"/><rect x="12" y="6" width="3" height="1" fill="#fff"/><rect x="15" y="6" width="1" height="1" fill="#000"/><rect x="2" y="7" width="2" height="1" fill="#000"/><rect x="4" y="7" width="1" height="1" fill="#ffff00"/><rect x="5" y="7" width="1" height="1" fill="#000"/><rect x="6" y="7" width="2" height="1" fill="#ffff00"/><rect x="8" y="7" width="1" height="1" fill="#000"/><rect x="9" y="7" width="2" height="1" fill="#ffff00"/><rect x="11" y="7" width="1" height="1" fill="#000"/><rect x="12" y="7" width="1" height="1" fill="#fff"/><rect x="13" y="7" width="1" height="1" fill="#000"/><rect x="14" y="7" width="1" height="1" fill="#fff"/><rect x="15" y="7" width="1" height="1" fill="#000"/><rect x="3" y="8" width="2" height="1" fill="#000"/><rect x="5" y="8" width="1" height="1" fill="#ffff00"/><rect x="6" y="8" width="2" height="1" fill="#000"/><rect x="8" y="8" width="1" height="1" fill="#fff"/><rect x="9" y="8" width="1" height="1" fill="#000"/><rect x="10" y="8" width="1" height="1" fill="#ffff00"/><rect x="11" y="8" width="1" height="1" fill="#000"/><rect x="12" y="8" width="3" height="1" fill="#fff"/><rect x="15" y="8" width="1" height="1" fill="#000"/><rect x="4" y="9" width="2" height="1" fill="#000"/><rect x="6" y="9" width="3" height="1" fill="#fff"/><rect x="9" y="9" width="3" height="1" fill="#000"/><rect x="12" y="9" width="1" height="1" fill="#fff"/><rect x="13" y="9" width="1" height="1" fill="#000"/><rect x="14" y="9" width="1" height="1" fill="#fff"/><rect x="15" y="9" width="1" height="1" fill="#000"/><rect x="4" y="10" width="1" height="1" fill="#000"/><rect x="5" y="10" width="10" height="1" fill="#fff"/><rect x="15" y="10" width="1" height="1" fill="#000"/><rect x="4" y="11" width="1" height="1" fill="#000"/><rect x="5" y="11" width="1" height="1" fill="#fff"/><rect x="6" y="11" width="2" height="1" fill="#000"/><rect x="8" y="11" width="1" height="1" fill="#fff"/><rect x="9" y="11" width="2" height="1" fill="#000"/><rect x="11" y="11" width="1" height="1" fill="#fff"/><rect x="12" y="11" width="2" height="1" fill="#000"/><rect x="14" y="11" width="1" height="1" fill="#fff"/><rect x="15" y="11" width="1" height="1" fill="#000"/><rect x="4" y="12" width="1" height="1" fill="#000"/><rect x="5" y="12" width="10" height="1" fill="#fff"/><rect x="15" y="12" width="1" height="1" fill="#000"/><rect x="4" y="13" width="1" height="1" fill="#000"/><rect x="5" y="13" width="1" height="1" fill="#fff"/><rect x="6" y="13" width="3" height="1" fill="#000"/><rect x="9" y="13" width="1" height="1" fill="#fff"/><rect x="10" y="13" width="1" height="1" fill="#000"/><rect x="11" y="13" width="1" height="1" fill="#fff"/><rect x="12" y="13" width="2" height="1" fill="#000"/><rect x="14" y="13" width="1" height="1" fill="#fff"/><rect x="15" y="13" width="1" height="1" fill="#000"/><rect x="4" y="14" width="1" height="1" fill="#000"/><rect x="5" y="14" width="10" height="1" fill="#fff"/><rect x="15" y="14" width="1" height="1" fill="#000"/><rect x="4" y="15" width="12" height="1" fill="#000"/></svg>
<div style="left:397px;top:174px;width:83px;height:19px;background:#fff;border:1px solid #7a7a7a"></div>
<div style="left:483px;top:175px;width:21px;height:17px;background:#e1e1e1;border:1px solid #adadad"></div>
<svg style="left:487px;top:177px" width="16" height="16" viewBox="0 0 16 16" shape-rendering="crispEdges"><rect x="0" y="0" width="4" height="1" fill="#00ffff"/><rect x="4" y="0" width="9" height="1" fill="#000"/><rect x="0" y="1" width="3" height="1" fill="#00ffff"/><rect x="3" y="1" width="1" height="1" fill="#000"/><rect x="4" y="1" width="4" height="1" fill="#ffff00"/><rect x="8" y="1" width="2" height="1" fill="#000"/><rect x="10" y="1" width="2" height="1" fill="#fff"/><rect x="12" y="1" width="2" height="1" fill="#000"/><rect x="0" y="2" width="2" height="1" fill="#00ffff"/><rect x="2" y="2" width="1" height="1" fill="#000"/><rect x="3" y="2" width="1" height="1" fill="#ffff00"/><rect x="4" y="2" width="1" height="1" fill="#ffffff"/><rect x="5" y="2" width="1" height="1" fill="#ffff00"/><rect x="6" y="2" width="1" height="1" fill="#000"/><rect x="7" y="2" width="3" height="1" fill="#ffff00"/><rect x="10" y="2" width="1" height="1" fill="#000"/><rect x="11" y="2" width="1" height="1" fill="#fff"/><rect x="12" y="2" width="1" height="1" fill="#000"/><rect x="13" y="2" width="1" height="1" fill="#fff"/><rect x="14" y="2" width="1" height="1" fill="#000"/><rect x="0" y="3" width="1" height="1" fill="#00ffff"/><rect x="1" y="3" width="1" height="1" fill="#000"/><rect x="2" y="3" width="1" height="1" fill="#ffff00"/><rect x="3" y="3" width="1" height="1" fill="#ffffff"/><rect x="4" y="3" width="1" height="1" fill="#ffff00"/><rect x="5" y="3" width="1" height="1" fill="#ffffff"/><rect x="6" y="3" width="1" height="1" fill="#ffff00"/><rect x="7" y="3" width="3" height="1" fill="#000"/><rect x="10" y="3" width="2" height="1" fill="#fff"/><rect x="12" y="3" width="1" height="1" fill="#000"/><rect x="13" y="3" width="2" height="1" fill="#fff"/><rect x="15" y="3" width="1" height="1" fill="#000"/><rect x="0" y="4" width="2" height="1" fill="#000"/><rect x="2" y="4" width="1" height="1" fill="#ffffff"/><rect x="3" y="4" width="1" height="1" fill="#ffff00"/><rect x="4" y="4" width="1" height="1" fill="#ffffff"/><rect x="5" y="4" width="1" height="1" fill="#ffff00"/><rect x="6" y="4" width="1" height="1" fill="#ffffff"/><rect x="7" y="4" width="1" height="1" fill="#ffff00"/><rect x="8" y="4" width="2" height="1" fill="#000"/><rect x="10" y="4" width="2" height="1" fill="#fff"/><rect x="12" y="4" width="4" height="1" fill="#000"/><rect x="1" y="5" width="1" height="1" fill="#000"/><rect x="2" y="5" width="1" height="1" fill="#ffff00"/><rect x="3" y="5" width="1" height="1" fill="#ffffff"/><rect x="4" y="5" width="1" height="1" fill="#ffff00"/><rect x="5" y="5" width="1" height="1" fill="#ffffff"/><rect x="6" y="5" width="1" height="1" fill="#000"/><rect x="7" y="5" width="2" height="1" fill="#ffff00"/><rect x="9" y="5" width="2" height="1" fill="#000"/><rect x="11" y="5" width="4" height="1" fill="#fff"/><rect x="15" y="5" width="1" height="1" fill="#000"/><rect x="1" y="6" width="2" height="1" fill="#000"/><rect x="3" y="6" width="1" height="1" fill="#ffff00"/><rect x="4" y="6" width="1" height="1" fill="#ffffff"/><rect x="5" y="6" width="2" height="1" fill="#ffff00"/><rect x="7" y="6" width="1" height="1" fill="#000"/><rect x="8" y="6" width="2" height="1" fill="#ffff00"/><rect x="10" y="6" width="2" height="1" fill="#000"/><rect x="12" y="6" width="3" height="1" fill="#fff"/><rect x="15" y="6" width="1" height="1" fill="#000"/><rect x="2" y="7" width="2" height="1" fill="#000"/><rect x="4" y="7" width="1" height="1" fill="#ffff00"/><rect x="5" y="7" width="1" height="1" fill="#000"/><rect x="6" y="7" width="2" height="1" fill="#ffff00"/><rect x="8" y="7" width="1" height="1" fill="#000"/><rect x="9" y="7" width="2" height="1" fill="#ffff00"/><rect x="11" y="7" width="1" height="1" fill="#000"/><rect x="12" y="7" width="1" height="1" fill="#fff"/><rect x="13" y="7" width="1" height="1" fill="#000"/><rect x="14" y="7" width="1" height="1" fill="#fff"/><rect x="15" y="7" width="1" height="1" fill="#000"/><rect x="3" y="8" width="2" height="1" fill="#000"/><rect x="5" y="8" width="1" height="1" fill="#ffff00"/><rect x="6" y="8" width="2" height="1" fill="#000"/><rect x="8" y="8" width="1" height="1" fill="#fff"/><rect x="9" y="8" width="1" height="1" fill="#000"/><rect x="10" y="8" width="1" height="1" fill="#ffff00"/><rect x="11" y="8" width="1" height="1" fill="#000"/><rect x="12" y="8" width="3" height="1" fill="#fff"/><rect x="15" y="8" width="1" height="1" fill="#000"/><rect x="4" y="9" width="2" height="1" fill="#000"/><rect x="6" y="9" width="3" height="1" fill="#fff"/><rect x="9" y="9" width="3" height="1" fill="#000"/><rect x="12" y="9" width="1" height="1" fill="#fff"/><rect x="13" y="9" width="1" height="1" fill="#000"/><rect x="14" y="9" width="1" height="1" fill="#fff"/><rect x="15" y="9" width="1" height="1" fill="#000"/><rect x="4" y="10" width="1" height="1" fill="#000"/><rect x="5" y="10" width="10" height="1" fill="#fff"/><rect x="15" y="10" width="1" height="1" fill="#000"/><rect x="4" y="11" width="1" height="1" fill="#000"/><rect x="5" y="11" width="1" height="1" fill="#fff"/><rect x="6" y="11" width="2" height="1" fill="#000"/><rect x="8" y="11" width="1" height="1" fill="#fff"/><rect x="9" y="11" width="2" height="1" fill="#000"/><rect x="11" y="11" width="1" height="1" fill="#fff"/><rect x="12" y="11" width="2" height="1" fill="#000"/><rect x="14" y="11" width="1" height="1" fill="#fff"/><rect x="15" y="11" width="1" height="1" fill="#000"/><rect x="4" y="12" width="1" height="1" fill="#000"/><rect x="5" y="12" width="10" height="1" fill="#fff"/><rect x="15" y="12" width="1" height="1" fill="#000"/><rect x="4" y="13" width="1" height="1" fill="#000"/><rect x="5" y="13" width="1" height="1" fill="#fff"/><rect x="6" y="13" width="3" height="1" fill="#000"/><rect x="9" y="13" width="1" height="1" fill="#fff"/><rect x="10" y="13" width="1" height="1" fill="#000"/><rect x="11" y="13" width="1" height="1" fill="#fff"/><rect x="12" y="13" width="2" height="1" fill="#000"/><rect x="14" y="13" width="1" height="1" fill="#fff"/><rect x="15" y="13" width="1" height="1" fill="#000"/><rect x="4" y="14" width="1" height="1" fill="#000"/><rect x="5" y="14" width="10" height="1" fill="#fff"/><rect x="15" y="14" width="1" height="1" fill="#000"/><rect x="4" y="15" width="12" height="1" fill="#000"/></svg>
<div style="left:397px;top:194px;width:83px;height:19px;background:#fff;border:1px solid #7a7a7a"></div>
<div style="left:483px;top:195px;width:21px;height:17px;background:#e1e1e1;border:1px solid #adadad"></div>
<svg style="left:487px;top:197px" width="16" height="16" viewBox="0 0 16 16" shape-rendering="crispEdges"><rect x="0" y="0" width="4" height="1" fill="#00ffff"/><rect x="4" y="0" width="9" height="1" fill="#000"/><rect x="0" y="1" width="3" height="1" fill="#00ffff"/><rect x="3" y="1" width="1" height="1" fill="#000"/><rect x="4" y="1" width="4" height="1" fill="#ffff00"/><rect x="8" y="1" width="2" height="1" fill="#000"/><rect x="10" y="1" width="2" height="1" fill="#fff"/><rect x="12" y="1" width="2" height="1" fill="#000"/><rect x="0" y="2" width="2" height="1" fill="#00ffff"/><rect x="2" y="2" width="1" height="1" fill="#000"/><rect x="3" y="2" width="1" height="1" fill="#ffff00"/><rect x="4" y="2" width="1" height="1" fill="#ffffff"/><rect x="5" y="2" width="1" height="1" fill="#ffff00"/><rect x="6" y="2" width="1" height="1" fill="#000"/><rect x="7" y="2" width="3" height="1" fill="#ffff00"/><rect x="10" y="2" width="1" height="1" fill="#000"/><rect x="11" y="2" width="1" height="1" fill="#fff"/><rect x="12" y="2" width="1" height="1" fill="#000"/><rect x="13" y="2" width="1" height="1" fill="#fff"/><rect x="14" y="2" width="1" height="1" fill="#000"/><rect x="0" y="3" width="1" height="1" fill="#00ffff"/><rect x="1" y="3" width="1" height="1" fill="#000"/><rect x="2" y="3" width="1" height="1" fill="#ffff00"/><rect x="3" y="3" width="1" height="1" fill="#ffffff"/><rect x="4" y="3" width="1" height="1" fill="#ffff00"/><rect x="5" y="3" width="1" height="1" fill="#ffffff"/><rect x="6" y="3" width="1" height="1" fill="#ffff00"/><rect x="7" y="3" width="3" height="1" fill="#000"/><rect x="10" y="3" width="2" height="1" fill="#fff"/><rect x="12" y="3" width="1" height="1" fill="#000"/><rect x="13" y="3" width="2" height="1" fill="#fff"/><rect x="15" y="3" width="1" height="1" fill="#000"/><rect x="0" y="4" width="2" height="1" fill="#000"/><rect x="2" y="4" width="1" height="1" fill="#ffffff"/><rect x="3" y="4" width="1" height="1" fill="#ffff00"/><rect x="4" y="4" width="1" height="1" fill="#ffffff"/><rect x="5" y="4" width="1" height="1" fill="#ffff00"/><rect x="6" y="4" width="1" height="1" fill="#ffffff"/><rect x="7" y="4" width="1" height="1" fill="#ffff00"/><rect x="8" y="4" width="2" height="1" fill="#000"/><rect x="10" y="4" width="2" height="1" fill="#fff"/><rect x="12" y="4" width="4" height="1" fill="#000"/><rect x="1" y="5" width="1" height="1" fill="#000"/><rect x="2" y="5" width="1" height="1" fill="#ffff00"/><rect x="3" y="5" width="1" height="1" fill="#ffffff"/><rect x="4" y="5" width="1" height="1" fill="#ffff00"/><rect x="5" y="5" width="1" height="1" fill="#ffffff"/><rect x="6" y="5" width="1" height="1" fill="#000"/><rect x="7" y="5" width="2" height="1" fill="#ffff00"/><rect x="9" y="5" width="2" height="1" fill="#000"/><rect x="11" y="5" width="4" height="1" fill="#fff"/><rect x="15" y="5" width="1" height="1" fill="#000"/><rect x="1" y="6" width="2" height="1" fill="#000"/><rect x="3" y="6" width="1" height="1" fill="#ffff00"/><rect x="4" y="6" width="1" height="1" fill="#ffffff"/><rect x="5" y="6" width="2" height="1" fill="#ffff00"/><rect x="7" y="6" width="1" height="1" fill="#000"/><rect x="8" y="6" width="2" height="1" fill="#ffff00"/><rect x="10" y="6" width="2" height="1" fill="#000"/><rect x="12" y="6" width="3" height="1" fill="#fff"/><rect x="15" y="6" width="1" height="1" fill="#000"/><rect x="2" y="7" width="2" height="1" fill="#000"/><rect x="4" y="7" width="1" height="1" fill="#ffff00"/><rect x="5" y="7" width="1" height="1" fill="#000"/><rect x="6" y="7" width="2" height="1" fill="#ffff00"/><rect x="8" y="7" width="1" height="1" fill="#000"/><rect x="9" y="7" width="2" height="1" fill="#ffff00"/><rect x="11" y="7" width="1" height="1" fill="#000"/><rect x="12" y="7" width="1" height="1" fill="#fff"/><rect x="13" y="7" width="1" height="1" fill="#000"/><rect x="14" y="7" width="1" height="1" fill="#fff"/><rect x="15" y="7" width="1" height="1" fill="#000"/><rect x="3" y="8" width="2" height="1" fill="#000"/><rect x="5" y="8" width="1" height="1" fill="#ffff00"/><rect x="6" y="8" width="2" height="1" fill="#000"/><rect x="8" y="8" width="1" height="1" fill="#fff"/><rect x="9" y="8" width="1" height="1" fill="#000"/><rect x="10" y="8" width="1" height="1" fill="#ffff00"/><rect x="11" y="8" width="1" height="1" fill="#000"/><rect x="12" y="8" width="3" height="1" fill="#fff"/><rect x="15" y="8" width="1" height="1" fill="#000"/><rect x="4" y="9" width="2" height="1" fill="#000"/><rect x="6" y="9" width="3" height="1" fill="#fff"/><rect x="9" y="9" width="3" height="1" fill="#000"/><rect x="12" y="9" width="1" height="1" fill="#fff"/><rect x="13" y="9" width="1" height="1" fill="#000"/><rect x="14" y="9" width="1" height="1" fill="#fff"/><rect x="15" y="9" width="1" height="1" fill="#000"/><rect x="4" y="10" width="1" height="1" fill="#000"/><rect x="5" y="10" width="10" height="1" fill="#fff"/><rect x="15" y="10" width="1" height="1" fill="#000"/><rect x="4" y="11" width="1" height="1" fill="#000"/><rect x="5" y="11" width="1" height="1" fill="#fff"/><rect x="6" y="11" width="2" height="1" fill="#000"/><rect x="8" y="11" width="1" height="1" fill="#fff"/><rect x="9" y="11" width="2" height="1" fill="#000"/><rect x="11" y="11" width="1" height="1" fill="#fff"/><rect x="12" y="11" width="2" height="1" fill="#000"/><rect x="14" y="11" width="1" height="1" fill="#fff"/><rect x="15" y="11" width="1" height="1" fill="#000"/><rect x="4" y="12" width="1" height="1" fill="#000"/><rect x="5" y="12" width="10" height="1" fill="#fff"/><rect x="15" y="12" width="1" height="1" fill="#000"/><rect x="4" y="13" width="1" height="1" fill="#000"/><rect x="5" y="13" width="1" height="1" fill="#fff"/><rect x="6" y="13" width="3" height="1" fill="#000"/><rect x="9" y="13" width="1" height="1" fill="#fff"/><rect x="10" y="13" width="1" height="1" fill="#000"/><rect x="11" y="13" width="1" height="1" fill="#fff"/><rect x="12" y="13" width="2" height="1" fill="#000"/><rect x="14" y="13" width="1" height="1" fill="#fff"/><rect x="15" y="13" width="1" height="1" fill="#000"/><rect x="4" y="14" width="1" height="1" fill="#000"/><rect x="5" y="14" width="10" height="1" fill="#fff"/><rect x="15" y="14" width="1" height="1" fill="#000"/><rect x="4" y="15" width="12" height="1" fill="#000"/></svg>
<div style="left:397px;top:214px;width:83px;height:19px;background:#fff;border:1px solid #7a7a7a"></div>
<div style="left:397px;top:234px;width:107px;height:19px;background:#fff;border:1px solid #7a7a7a"></div>
<div style="left:397px;top:75px;width:100px;height:19px;background:#fff;border:1px solid #0078d7"></div>
<div style="left:400px;top:78px;width:61px;height:13px;background:#3399ff;"></div>
<span id="t44" class="t" style="top:78px;line-height:14px;color:#fff;left:400.5px;transform:scaleX(0.8989);transform-origin:left center;">1234567890</span>
<div style="left:315px;top:255px;width:142px;height:21px;background:#c0dcc0;"></div>
<span id="t45" class="t" style="top:258px;line-height:14px;left:332px;transform:scaleX(0.8960);transform-origin:left center;">Typ doklad<u>u</u></span>
<div style="left:397px;top:255px;width:31px;height:19px;background:#fff;border:1px solid #7a7a7a"></div>
<div style="left:432px;top:256px;width:21px;height:17px;background:#e1e1e1;border:1px solid #adadad"></div>
<svg style="left:436px;top:258px" width="16" height="16" viewBox="0 0 16 16" shape-rendering="crispEdges"><rect x="0" y="0" width="4" height="1" fill="#00ffff"/><rect x="4" y="0" width="9" height="1" fill="#000"/><rect x="0" y="1" width="3" height="1" fill="#00ffff"/><rect x="3" y="1" width="1" height="1" fill="#000"/><rect x="4" y="1" width="4" height="1" fill="#ffff00"/><rect x="8" y="1" width="2" height="1" fill="#000"/><rect x="10" y="1" width="2" height="1" fill="#fff"/><rect x="12" y="1" width="2" height="1" fill="#000"/><rect x="0" y="2" width="2" height="1" fill="#00ffff"/><rect x="2" y="2" width="1" height="1" fill="#000"/><rect x="3" y="2" width="1" height="1" fill="#ffff00"/><rect x="4" y="2" width="1" height="1" fill="#ffffff"/><rect x="5" y="2" width="1" height="1" fill="#ffff00"/><rect x="6" y="2" width="1" height="1" fill="#000"/><rect x="7" y="2" width="3" height="1" fill="#ffff00"/><rect x="10" y="2" width="1" height="1" fill="#000"/><rect x="11" y="2" width="1" height="1" fill="#fff"/><rect x="12" y="2" width="1" height="1" fill="#000"/><rect x="13" y="2" width="1" height="1" fill="#fff"/><rect x="14" y="2" width="1" height="1" fill="#000"/><rect x="0" y="3" width="1" height="1" fill="#00ffff"/><rect x="1" y="3" width="1" height="1" fill="#000"/><rect x="2" y="3" width="1" height="1" fill="#ffff00"/><rect x="3" y="3" width="1" height="1" fill="#ffffff"/><rect x="4" y="3" width="1" height="1" fill="#ffff00"/><rect x="5" y="3" width="1" height="1" fill="#ffffff"/><rect x="6" y="3" width="1" height="1" fill="#ffff00"/><rect x="7" y="3" width="3" height="1" fill="#000"/><rect x="10" y="3" width="2" height="1" fill="#fff"/><rect x="12" y="3" width="1" height="1" fill="#000"/><rect x="13" y="3" width="2" height="1" fill="#fff"/><rect x="15" y="3" width="1" height="1" fill="#000"/><rect x="0" y="4" width="2" height="1" fill="#000"/><rect x="2" y="4" width="1" height="1" fill="#ffffff"/><rect x="3" y="4" width="1" height="1" fill="#ffff00"/><rect x="4" y="4" width="1" height="1" fill="#ffffff"/><rect x="5" y="4" width="1" height="1" fill="#ffff00"/><rect x="6" y="4" width="1" height="1" fill="#ffffff"/><rect x="7" y="4" width="1" height="1" fill="#ffff00"/><rect x="8" y="4" width="2" height="1" fill="#000"/><rect x="10" y="4" width="2" height="1" fill="#fff"/><rect x="12" y="4" width="4" height="1" fill="#000"/><rect x="1" y="5" width="1" height="1" fill="#000"/><rect x="2" y="5" width="1" height="1" fill="#ffff00"/><rect x="3" y="5" width="1" height="1" fill="#ffffff"/><rect x="4" y="5" width="1" height="1" fill="#ffff00"/><rect x="5" y="5" width="1" height="1" fill="#ffffff"/><rect x="6" y="5" width="1" height="1" fill="#000"/><rect x="7" y="5" width="2" height="1" fill="#ffff00"/><rect x="9" y="5" width="2" height="1" fill="#000"/><rect x="11" y="5" width="4" height="1" fill="#fff"/><rect x="15" y="5" width="1" height="1" fill="#000"/><rect x="1" y="6" width="2" height="1" fill="#000"/><rect x="3" y="6" width="1" height="1" fill="#ffff00"/><rect x="4" y="6" width="1" height="1" fill="#ffffff"/><rect x="5" y="6" width="2" height="1" fill="#ffff00"/><rect x="7" y="6" width="1" height="1" fill="#000"/><rect x="8" y="6" width="2" height="1" fill="#ffff00"/><rect x="10" y="6" width="2" height="1" fill="#000"/><rect x="12" y="6" width="3" height="1" fill="#fff"/><rect x="15" y="6" width="1" height="1" fill="#000"/><rect x="2" y="7" width="2" height="1" fill="#000"/><rect x="4" y="7" width="1" height="1" fill="#ffff00"/><rect x="5" y="7" width="1" height="1" fill="#000"/><rect x="6" y="7" width="2" height="1" fill="#ffff00"/><rect x="8" y="7" width="1" height="1" fill="#000"/><rect x="9" y="7" width="2" height="1" fill="#ffff00"/><rect x="11" y="7" width="1" height="1" fill="#000"/><rect x="12" y="7" width="1" height="1" fill="#fff"/><rect x="13" y="7" width="1" height="1" fill="#000"/><rect x="14" y="7" width="1" height="1" fill="#fff"/><rect x="15" y="7" width="1" height="1" fill="#000"/><rect x="3" y="8" width="2" height="1" fill="#000"/><rect x="5" y="8" width="1" height="1" fill="#ffff00"/><rect x="6" y="8" width="2" height="1" fill="#000"/><rect x="8" y="8" width="1" height="1" fill="#fff"/><rect x="9" y="8" width="1" height="1" fill="#000"/><rect x="10" y="8" width="1" height="1" fill="#ffff00"/><rect x="11" y="8" width="1" height="1" fill="#000"/><rect x="12" y="8" width="3" height="1" fill="#fff"/><rect x="15" y="8" width="1" height="1" fill="#000"/><rect x="4" y="9" width="2" height="1" fill="#000"/><rect x="6" y="9" width="3" height="1" fill="#fff"/><rect x="9" y="9" width="3" height="1" fill="#000"/><rect x="12" y="9" width="1" height="1" fill="#fff"/><rect x="13" y="9" width="1" height="1" fill="#000"/><rect x="14" y="9" width="1" height="1" fill="#fff"/><rect x="15" y="9" width="1" height="1" fill="#000"/><rect x="4" y="10" width="1" height="1" fill="#000"/><rect x="5" y="10" width="10" height="1" fill="#fff"/><rect x="15" y="10" width="1" height="1" fill="#000"/><rect x="4" y="11" width="1" height="1" fill="#000"/><rect x="5" y="11" width="1" height="1" fill="#fff"/><rect x="6" y="11" width="2" height="1" fill="#000"/><rect x="8" y="11" width="1" height="1" fill="#fff"/><rect x="9" y="11" width="2" height="1" fill="#000"/><rect x="11" y="11" width="1" height="1" fill="#fff"/><rect x="12" y="11" width="2" height="1" fill="#000"/><rect x="14" y="11" width="1" height="1" fill="#fff"/><rect x="15" y="11" width="1" height="1" fill="#000"/><rect x="4" y="12" width="1" height="1" fill="#000"/><rect x="5" y="12" width="10" height="1" fill="#fff"/><rect x="15" y="12" width="1" height="1" fill="#000"/><rect x="4" y="13" width="1" height="1" fill="#000"/><rect x="5" y="13" width="1" height="1" fill="#fff"/><rect x="6" y="13" width="3" height="1" fill="#000"/><rect x="9" y="13" width="1" height="1" fill="#fff"/><rect x="10" y="13" width="1" height="1" fill="#000"/><rect x="11" y="13" width="1" height="1" fill="#fff"/><rect x="12" y="13" width="2" height="1" fill="#000"/><rect x="14" y="13" width="1" height="1" fill="#fff"/><rect x="15" y="13" width="1" height="1" fill="#000"/><rect x="4" y="14" width="1" height="1" fill="#000"/><rect x="5" y="14" width="10" height="1" fill="#fff"/><rect x="15" y="14" width="1" height="1" fill="#000"/><rect x="4" y="15" width="12" height="1" fill="#000"/></svg>
<span id="t46" class="t" style="top:305px;line-height:14px;left:320.5px;transform:scaleX(0.8856);transform-origin:left center;">Predkont.</span>
<div style="left:378px;top:302px;width:46px;height:19px;background:#fff;border:1px solid #7a7a7a"></div>
<div style="left:427px;top:303px;width:21px;height:17px;background:#e1e1e1;border:1px solid #adadad"></div>
<svg style="left:431px;top:305px" width="16" height="16" viewBox="0 0 16 16" shape-rendering="crispEdges"><rect x="0" y="0" width="4" height="1" fill="#00ffff"/><rect x="4" y="0" width="9" height="1" fill="#000"/><rect x="0" y="1" width="3" height="1" fill="#00ffff"/><rect x="3" y="1" width="1" height="1" fill="#000"/><rect x="4" y="1" width="4" height="1" fill="#ffff00"/><rect x="8" y="1" width="2" height="1" fill="#000"/><rect x="10" y="1" width="2" height="1" fill="#fff"/><rect x="12" y="1" width="2" height="1" fill="#000"/><rect x="0" y="2" width="2" height="1" fill="#00ffff"/><rect x="2" y="2" width="1" height="1" fill="#000"/><rect x="3" y="2" width="1" height="1" fill="#ffff00"/><rect x="4" y="2" width="1" height="1" fill="#ffffff"/><rect x="5" y="2" width="1" height="1" fill="#ffff00"/><rect x="6" y="2" width="1" height="1" fill="#000"/><rect x="7" y="2" width="3" height="1" fill="#ffff00"/><rect x="10" y="2" width="1" height="1" fill="#000"/><rect x="11" y="2" width="1" height="1" fill="#fff"/><rect x="12" y="2" width="1" height="1" fill="#000"/><rect x="13" y="2" width="1" height="1" fill="#fff"/><rect x="14" y="2" width="1" height="1" fill="#000"/><rect x="0" y="3" width="1" height="1" fill="#00ffff"/><rect x="1" y="3" width="1" height="1" fill="#000"/><rect x="2" y="3" width="1" height="1" fill="#ffff00"/><rect x="3" y="3" width="1" height="1" fill="#ffffff"/><rect x="4" y="3" width="1" height="1" fill="#ffff00"/><rect x="5" y="3" width="1" height="1" fill="#ffffff"/><rect x="6" y="3" width="1" height="1" fill="#ffff00"/><rect x="7" y="3" width="3" height="1" fill="#000"/><rect x="10" y="3" width="2" height="1" fill="#fff"/><rect x="12" y="3" width="1" height="1" fill="#000"/><rect x="13" y="3" width="2" height="1" fill="#fff"/><rect x="15" y="3" width="1" height="1" fill="#000"/><rect x="0" y="4" width="2" height="1" fill="#000"/><rect x="2" y="4" width="1" height="1" fill="#ffffff"/><rect x="3" y="4" width="1" height="1" fill="#ffff00"/><rect x="4" y="4" width="1" height="1" fill="#ffffff"/><rect x="5" y="4" width="1" height="1" fill="#ffff00"/><rect x="6" y="4" width="1" height="1" fill="#ffffff"/><rect x="7" y="4" width="1" height="1" fill="#ffff00"/><rect x="8" y="4" width="2" height="1" fill="#000"/><rect x="10" y="4" width="2" height="1" fill="#fff"/><rect x="12" y="4" width="4" height="1" fill="#000"/><rect x="1" y="5" width="1" height="1" fill="#000"/><rect x="2" y="5" width="1" height="1" fill="#ffff00"/><rect x="3" y="5" width="1" height="1" fill="#ffffff"/><rect x="4" y="5" width="1" height="1" fill="#ffff00"/><rect x="5" y="5" width="1" height="1" fill="#ffffff"/><rect x="6" y="5" width="1" height="1" fill="#000"/><rect x="7" y="5" width="2" height="1" fill="#ffff00"/><rect x="9" y="5" width="2" height="1" fill="#000"/><rect x="11" y="5" width="4" height="1" fill="#fff"/><rect x="15" y="5" width="1" height="1" fill="#000"/><rect x="1" y="6" width="2" height="1" fill="#000"/><rect x="3" y="6" width="1" height="1" fill="#ffff00"/><rect x="4" y="6" width="1" height="1" fill="#ffffff"/><rect x="5" y="6" width="2" height="1" fill="#ffff00"/><rect x="7" y="6" width="1" height="1" fill="#000"/><rect x="8" y="6" width="2" height="1" fill="#ffff00"/><rect x="10" y="6" width="2" height="1" fill="#000"/><rect x="12" y="6" width="3" height="1" fill="#fff"/><rect x="15" y="6" width="1" height="1" fill="#000"/><rect x="2" y="7" width="2" height="1" fill="#000"/><rect x="4" y="7" width="1" height="1" fill="#ffff00"/><rect x="5" y="7" width="1" height="1" fill="#000"/><rect x="6" y="7" width="2" height="1" fill="#ffff00"/><rect x="8" y="7" width="1" height="1" fill="#000"/><rect x="9" y="7" width="2" height="1" fill="#ffff00"/><rect x="11" y="7" width="1" height="1" fill="#000"/><rect x="12" y="7" width="1" height="1" fill="#fff"/><rect x="13" y="7" width="1" height="1" fill="#000"/><rect x="14" y="7" width="1" height="1" fill="#fff"/><rect x="15" y="7" width="1" height="1" fill="#000"/><rect x="3" y="8" width="2" height="1" fill="#000"/><rect x="5" y="8" width="1" height="1" fill="#ffff00"/><rect x="6" y="8" width="2" height="1" fill="#000"/><rect x="8" y="8" width="1" height="1" fill="#fff"/><rect x="9" y="8" width="1" height="1" fill="#000"/><rect x="10" y="8" width="1" height="1" fill="#ffff00"/><rect x="11" y="8" width="1" height="1" fill="#000"/><rect x="12" y="8" width="3" height="1" fill="#fff"/><rect x="15" y="8" width="1" height="1" fill="#000"/><rect x="4" y="9" width="2" height="1" fill="#000"/><rect x="6" y="9" width="3" height="1" fill="#fff"/><rect x="9" y="9" width="3" height="1" fill="#000"/><rect x="12" y="9" width="1" height="1" fill="#fff"/><rect x="13" y="9" width="1" height="1" fill="#000"/><rect x="14" y="9" width="1" height="1" fill="#fff"/><rect x="15" y="9" width="1" height="1" fill="#000"/><rect x="4" y="10" width="1" height="1" fill="#000"/><rect x="5" y="10" width="10" height="1" fill="#fff"/><rect x="15" y="10" width="1" height="1" fill="#000"/><rect x="4" y="11" width="1" height="1" fill="#000"/><rect x="5" y="11" width="1" height="1" fill="#fff"/><rect x="6" y="11" width="2" height="1" fill="#000"/><rect x="8" y="11" width="1" height="1" fill="#fff"/><rect x="9" y="11" width="2" height="1" fill="#000"/><rect x="11" y="11" width="1" height="1" fill="#fff"/><rect x="12" y="11" width="2" height="1" fill="#000"/><rect x="14" y="11" width="1" height="1" fill="#fff"/><rect x="15" y="11" width="1" height="1" fill="#000"/><rect x="4" y="12" width="1" height="1" fill="#000"/><rect x="5" y="12" width="10" height="1" fill="#fff"/><rect x="15" y="12" width="1" height="1" fill="#000"/><rect x="4" y="13" width="1" height="1" fill="#000"/><rect x="5" y="13" width="1" height="1" fill="#fff"/><rect x="6" y="13" width="3" height="1" fill="#000"/><rect x="9" y="13" width="1" height="1" fill="#fff"/><rect x="10" y="13" width="1" height="1" fill="#000"/><rect x="11" y="13" width="1" height="1" fill="#fff"/><rect x="12" y="13" width="2" height="1" fill="#000"/><rect x="14" y="13" width="1" height="1" fill="#fff"/><rect x="15" y="13" width="1" height="1" fill="#000"/><rect x="4" y="14" width="1" height="1" fill="#000"/><rect x="5" y="14" width="10" height="1" fill="#fff"/><rect x="15" y="14" width="1" height="1" fill="#000"/><rect x="4" y="15" width="12" height="1" fill="#000"/></svg>
<div style="left:510px;top:194px;width:179px;height:105px;background:#c0dcc0;"></div>
<div style="left:510px;top:214px;width:114px;height:20px;background:#f0f0f0;"></div>
<div style="left:510px;top:255px;width:87px;height:23px;background:#f0f0f0;"></div>
<span id="t47" class="t" style="top:157px;line-height:14px;left:552.5px;transform:scaleX(0.8956);transform-origin:left center;"><u>D</u>át.vystavenia</span>
<div style="left:624px;top:154px;width:63px;height:19px;background:#fff;border:1px solid #7a7a7a"></div>
<span id="t48" class="t" style="top:157px;line-height:14px;left:627px;transform:scaleX(0.8900);transform-origin:left center;">18.12.2018</span>
<span id="t49" class="t" style="top:177px;line-height:14px;left:558.5px;transform:scaleX(0.8803);transform-origin:left center;">Dát.splatnosti</span>
<div style="left:624px;top:174px;width:63px;height:19px;background:#fff;border:1px solid #7a7a7a"></div>
<span id="t50" class="t" style="top:177px;line-height:14px;left:627px;transform:scaleX(0.8900);transform-origin:left center;">18.12.2018</span>
<div style="left:689px;top:174px;width:21px;height:17px;background:#e1e1e1;border:1px solid #adadad"></div>
<svg style="left:693px;top:176px" width="16" height="16" viewBox="0 0 16 16" shape-rendering="crispEdges"><rect x="0" y="0" width="4" height="1" fill="#00ffff"/><rect x="4" y="0" width="9" height="1" fill="#000"/><rect x="0" y="1" width="3" height="1" fill="#00ffff"/><rect x="3" y="1" width="1" height="1" fill="#000"/><rect x="4" y="1" width="4" height="1" fill="#ffff00"/><rect x="8" y="1" width="2" height="1" fill="#000"/><rect x="10" y="1" width="2" height="1" fill="#fff"/><rect x="12" y="1" width="2" height="1" fill="#000"/><rect x="0" y="2" width="2" height="1" fill="#00ffff"/><rect x="2" y="2" width="1" height="1" fill="#000"/><rect x="3" y="2" width="1" height="1" fill="#ffff00"/><rect x="4" y="2" width="1" height="1" fill="#ffffff"/><rect x="5" y="2" width="1" height="1" fill="#ffff00"/><rect x="6" y="2" width="1" height="1" fill="#000"/><rect x="7" y="2" width="3" height="1" fill="#ffff00"/><rect x="10" y="2" width="1" height="1" fill="#000"/><rect x="11" y="2" width="1" height="1" fill="#fff"/><rect x="12" y="2" width="1" height="1" fill="#000"/><rect x="13" y="2" width="1" height="1" fill="#fff"/><rect x="14" y="2" width="1" height="1" fill="#000"/><rect x="0" y="3" width="1" height="1" fill="#00ffff"/><rect x="1" y="3" width="1" height="1" fill="#000"/><rect x="2" y="3" width="1" height="1" fill="#ffff00"/><rect x="3" y="3" width="1" height="1" fill="#ffffff"/><rect x="4" y="3" width="1" height="1" fill="#ffff00"/><rect x="5" y="3" width="1" height="1" fill="#ffffff"/><rect x="6" y="3" width="1" height="1" fill="#ffff00"/><rect x="7" y="3" width="3" height="1" fill="#000"/><rect x="10" y="3" width="2" height="1" fill="#fff"/><rect x="12" y="3" width="1" height="1" fill="#000"/><rect x="13" y="3" width="2" height="1" fill="#fff"/><rect x="15" y="3" width="1" height="1" fill="#000"/><rect x="0" y="4" width="2" height="1" fill="#000"/><rect x="2" y="4" width="1" height="1" fill="#ffffff"/><rect x="3" y="4" width="1" height="1" fill="#ffff00"/><rect x="4" y="4" width="1" height="1" fill="#ffffff"/><rect x="5" y="4" width="1" height="1" fill="#ffff00"/><rect x="6" y="4" width="1" height="1" fill="#ffffff"/><rect x="7" y="4" width="1" height="1" fill="#ffff00"/><rect x="8" y="4" width="2" height="1" fill="#000"/><rect x="10" y="4" width="2" height="1" fill="#fff"/><rect x="12" y="4" width="4" height="1" fill="#000"/><rect x="1" y="5" width="1" height="1" fill="#000"/><rect x="2" y="5" width="1" height="1" fill="#ffff00"/><rect x="3" y="5" width="1" height="1" fill="#ffffff"/><rect x="4" y="5" width="1" height="1" fill="#ffff00"/><rect x="5" y="5" width="1" height="1" fill="#ffffff"/><rect x="6" y="5" width="1" height="1" fill="#000"/><rect x="7" y="5" width="2" height="1" fill="#ffff00"/><rect x="9" y="5" width="2" height="1" fill="#000"/><rect x="11" y="5" width="4" height="1" fill="#fff"/><rect x="15" y="5" width="1" height="1" fill="#000"/><rect x="1" y="6" width="2" height="1" fill="#000"/><rect x="3" y="6" width="1" height="1" fill="#ffff00"/><rect x="4" y="6" width="1" height="1" fill="#ffffff"/><rect x="5" y="6" width="2" height="1" fill="#ffff00"/><rect x="7" y="6" width="1" height="1" fill="#000"/><rect x="8" y="6" width="2" height="1" fill="#ffff00"/><rect x="10" y="6" width="2" height="1" fill="#000"/><rect x="12" y="6" width="3" height="1" fill="#fff"/><rect x="15" y="6" width="1" height="1" fill="#000"/><rect x="2" y="7" width="2" height="1" fill="#000"/><rect x="4" y="7" width="1" height="1" fill="#ffff00"/><rect x="5" y="7" width="1" height="1" fill="#000"/><rect x="6" y="7" width="2" height="1" fill="#ffff00"/><rect x="8" y="7" width="1" height="1" fill="#000"/><rect x="9" y="7" width="2" height="1" fill="#ffff00"/><rect x="11" y="7" width="1" height="1" fill="#000"/><rect x="12" y="7" width="1" height="1" fill="#fff"/><rect x="13" y="7" width="1" height="1" fill="#000"/><rect x="14" y="7" width="1" height="1" fill="#fff"/><rect x="15" y="7" width="1" height="1" fill="#000"/><rect x="3" y="8" width="2" height="1" fill="#000"/><rect x="5" y="8" width="1" height="1" fill="#ffff00"/><rect x="6" y="8" width="2" height="1" fill="#000"/><rect x="8" y="8" width="1" height="1" fill="#fff"/><rect x="9" y="8" width="1" height="1" fill="#000"/><rect x="10" y="8" width="1" height="1" fill="#ffff00"/><rect x="11" y="8" width="1" height="1" fill="#000"/><rect x="12" y="8" width="3" height="1" fill="#fff"/><rect x="15" y="8" width="1" height="1" fill="#000"/><rect x="4" y="9" width="2" height="1" fill="#000"/><rect x="6" y="9" width="3" height="1" fill="#fff"/><rect x="9" y="9" width="3" height="1" fill="#000"/><rect x="12" y="9" width="1" height="1" fill="#fff"/><rect x="13" y="9" width="1" height="1" fill="#000"/><rect x="14" y="9" width="1" height="1" fill="#fff"/><rect x="15" y="9" width="1" height="1" fill="#000"/><rect x="4" y="10" width="1" height="1" fill="#000"/><rect x="5" y="10" width="10" height="1" fill="#fff"/><rect x="15" y="10" width="1" height="1" fill="#000"/><rect x="4" y="11" width="1" height="1" fill="#000"/><rect x="5" y="11" width="1" height="1" fill="#fff"/><rect x="6" y="11" width="2" height="1" fill="#000"/><rect x="8" y="11" width="1" height="1" fill="#fff"/><rect x="9" y="11" width="2" height="1" fill="#000"/><rect x="11" y="11" width="1" height="1" fill="#fff"/><rect x="12" y="11" width="2" height="1" fill="#000"/><rect x="14" y="11" width="1" height="1" fill="#fff"/><rect x="15" y="11" width="1" height="1" fill="#000"/><rect x="4" y="12" width="1" height="1" fill="#000"/><rect x="5" y="12" width="10" height="1" fill="#fff"/><rect x="15" y="12" width="1" height="1" fill="#000"/><rect x="4" y="13" width="1" height="1" fill="#000"/><rect x="5" y="13" width="1" height="1" fill="#fff"/><rect x="6" y="13" width="3" height="1" fill="#000"/><rect x="9" y="13" width="1" height="1" fill="#fff"/><rect x="10" y="13" width="1" height="1" fill="#000"/><rect x="11" y="13" width="1" height="1" fill="#fff"/><rect x="12" y="13" width="2" height="1" fill="#000"/><rect x="14" y="13" width="1" height="1" fill="#fff"/><rect x="15" y="13" width="1" height="1" fill="#000"/><rect x="4" y="14" width="1" height="1" fill="#000"/><rect x="5" y="14" width="10" height="1" fill="#fff"/><rect x="15" y="14" width="1" height="1" fill="#000"/><rect x="4" y="15" width="12" height="1" fill="#000"/></svg>
<span id="t51" class="t" style="top:197px;line-height:14px;font-weight:bold;-webkit-text-stroke:0.3px;left:541px;transform:scaleX(1.0061);transform-origin:left center;">Odpočet dane</span>
<div style="left:624px;top:194px;width:63px;height:19px;background:#fff;border:1px solid #7a7a7a"></div>
<span id="t52" class="t" style="top:197px;line-height:14px;left:627px;transform:scaleX(0.8900);transform-origin:left center;">18.12.2018</span>
<span id="t53" class="t" style="top:217px;line-height:14px;left:547.5px;transform:scaleX(0.9067);transform-origin:left center;">Dát.objednávky</span>
<div style="left:624px;top:214px;width:63px;height:19px;background:#fff;border:1px solid #7a7a7a"></div>
<span id="t54" class="t" style="top:237px;line-height:14px;left:550.5px;transform:scaleX(0.8785);transform-origin:left center;">Dátum dodania</span>
<div style="left:624px;top:234px;width:63px;height:19px;background:#fff;border:1px solid #7a7a7a"></div>
<span id="t55" class="t" style="top:260px;line-height:14px;left:598px;transform:scaleX(0.8747);transform-origin:left center;">T<u>y</u>p DPH</span>
<div style="left:642px;top:256px;width:20px;height:19px;background:#fff;border:1px solid #7a7a7a"></div>
<span id="t56" class="t" style="top:259px;line-height:14px;right:303px;transform:scaleX(0.8900);transform-origin:right center;">40</span>
<div style="left:664px;top:257px;width:20px;height:17px;background:#e1e1e1;border:1px solid #adadad"></div>
<svg style="left:667px;top:259px" width="16" height="16" viewBox="0 0 16 16" shape-rendering="crispEdges"><rect x="0" y="0" width="4" height="1" fill="#00ffff"/><rect x="4" y="0" width="9" height="1" fill="#000"/><rect x="0" y="1" width="3" height="1" fill="#00ffff"/><rect x="3" y="1" width="1" height="1" fill="#000"/><rect x="4" y="1" width="4" height="1" fill="#ffff00"/><rect x="8" y="1" width="2" height="1" fill="#000"/><rect x="10" y="1" width="2" height="1" fill="#fff"/><rect x="12" y="1" width="2" height="1" fill="#000"/><rect x="0" y="2" width="2" height="1" fill="#00ffff"/><rect x="2" y="2" width="1" height="1" fill="#000"/><rect x="3" y="2" width="1" height="1" fill="#ffff00"/><rect x="4" y="2" width="1" height="1" fill="#ffffff"/><rect x="5" y="2" width="1" height="1" fill="#ffff00"/><rect x="6" y="2" width="1" height="1" fill="#000"/><rect x="7" y="2" width="3" height="1" fill="#ffff00"/><rect x="10" y="2" width="1" height="1" fill="#000"/><rect x="11" y="2" width="1" height="1" fill="#fff"/><rect x="12" y="2" width="1" height="1" fill="#000"/><rect x="13" y="2" width="1" height="1" fill="#fff"/><rect x="14" y="2" width="1" height="1" fill="#000"/><rect x="0" y="3" width="1" height="1" fill="#00ffff"/><rect x="1" y="3" width="1" height="1" fill="#000"/><rect x="2" y="3" width="1" height="1" fill="#ffff00"/><rect x="3" y="3" width="1" height="1" fill="#ffffff"/><rect x="4" y="3" width="1" height="1" fill="#ffff00"/><rect x="5" y="3" width="1" height="1" fill="#ffffff"/><rect x="6" y="3" width="1" height="1" fill="#ffff00"/><rect x="7" y="3" width="3" height="1" fill="#000"/><rect x="10" y="3" width="2" height="1" fill="#fff"/><rect x="12" y="3" width="1" height="1" fill="#000"/><rect x="13" y="3" width="2" height="1" fill="#fff"/><rect x="15" y="3" width="1" height="1" fill="#000"/><rect x="0" y="4" width="2" height="1" fill="#000"/><rect x="2" y="4" width="1" height="1" fill="#ffffff"/><rect x="3" y="4" width="1" height="1" fill="#ffff00"/><rect x="4" y="4" width="1" height="1" fill="#ffffff"/><rect x="5" y="4" width="1" height="1" fill="#ffff00"/><rect x="6" y="4" width="1" height="1" fill="#ffffff"/><rect x="7" y="4" width="1" height="1" fill="#ffff00"/><rect x="8" y="4" width="2" height="1" fill="#000"/><rect x="10" y="4" width="2" height="1" fill="#fff"/><rect x="12" y="4" width="4" height="1" fill="#000"/><rect x="1" y="5" width="1" height="1" fill="#000"/><rect x="2" y="5" width="1" height="1" fill="#ffff00"/><rect x="3" y="5" width="1" height="1" fill="#ffffff"/><rect x="4" y="5" width="1" height="1" fill="#ffff00"/><rect x="5" y="5" width="1" height="1" fill="#ffffff"/><rect x="6" y="5" width="1" height="1" fill="#000"/><rect x="7" y="5" width="2" height="1" fill="#ffff00"/><rect x="9" y="5" width="2" height="1" fill="#000"/><rect x="11" y="5" width="4" height="1" fill="#fff"/><rect x="15" y="5" width="1" height="1" fill="#000"/><rect x="1" y="6" width="2" height="1" fill="#000"/><rect x="3" y="6" width="1" height="1" fill="#ffff00"/><rect x="4" y="6" width="1" height="1" fill="#ffffff"/><rect x="5" y="6" width="2" height="1" fill="#ffff00"/><rect x="7" y="6" width="1" height="1" fill="#000"/><rect x="8" y="6" width="2" height="1" fill="#ffff00"/><rect x="10" y="6" width="2" height="1" fill="#000"/><rect x="12" y="6" width="3" height="1" fill="#fff"/><rect x="15" y="6" width="1" height="1" fill="#000"/><rect x="2" y="7" width="2" height="1" fill="#000"/><rect x="4" y="7" width="1" height="1" fill="#ffff00"/><rect x="5" y="7" width="1" height="1" fill="#000"/><rect x="6" y="7" width="2" height="1" fill="#ffff00"/><rect x="8" y="7" width="1" height="1" fill="#000"/><rect x="9" y="7" width="2" height="1" fill="#ffff00"/><rect x="11" y="7" width="1" height="1" fill="#000"/><rect x="12" y="7" width="1" height="1" fill="#fff"/><rect x="13" y="7" width="1" height="1" fill="#000"/><rect x="14" y="7" width="1" height="1" fill="#fff"/><rect x="15" y="7" width="1" height="1" fill="#000"/><rect x="3" y="8" width="2" height="1" fill="#000"/><rect x="5" y="8" width="1" height="1" fill="#ffff00"/><rect x="6" y="8" width="2" height="1" fill="#000"/><rect x="8" y="8" width="1" height="1" fill="#fff"/><rect x="9" y="8" width="1" height="1" fill="#000"/><rect x="10" y="8" width="1" height="1" fill="#ffff00"/><rect x="11" y="8" width="1" height="1" fill="#000"/><rect x="12" y="8" width="3" height="1" fill="#fff"/><rect x="15" y="8" width="1" height="1" fill="#000"/><rect x="4" y="9" width="2" height="1" fill="#000"/><rect x="6" y="9" width="3" height="1" fill="#fff"/><rect x="9" y="9" width="3" height="1" fill="#000"/><rect x="12" y="9" width="1" height="1" fill="#fff"/><rect x="13" y="9" width="1" height="1" fill="#000"/><rect x="14" y="9" width="1" height="1" fill="#fff"/><rect x="15" y="9" width="1" height="1" fill="#000"/><rect x="4" y="10" width="1" height="1" fill="#000"/><rect x="5" y="10" width="10" height="1" fill="#fff"/><rect x="15" y="10" width="1" height="1" fill="#000"/><rect x="4" y="11" width="1" height="1" fill="#000"/><rect x="5" y="11" width="1" height="1" fill="#fff"/><rect x="6" y="11" width="2" height="1" fill="#000"/><rect x="8" y="11" width="1" height="1" fill="#fff"/><rect x="9" y="11" width="2" height="1" fill="#000"/><rect x="11" y="11" width="1" height="1" fill="#fff"/><rect x="12" y="11" width="2" height="1" fill="#000"/><rect x="14" y="11" width="1" height="1" fill="#fff"/><rect x="15" y="11" width="1" height="1" fill="#000"/><rect x="4" y="12" width="1" height="1" fill="#000"/><rect x="5" y="12" width="10" height="1" fill="#fff"/><rect x="15" y="12" width="1" height="1" fill="#000"/><rect x="4" y="13" width="1" height="1" fill="#000"/><rect x="5" y="13" width="1" height="1" fill="#fff"/><rect x="6" y="13" width="3" height="1" fill="#000"/><rect x="9" y="13" width="1" height="1" fill="#fff"/><rect x="10" y="13" width="1" height="1" fill="#000"/><rect x="11" y="13" width="1" height="1" fill="#fff"/><rect x="12" y="13" width="2" height="1" fill="#000"/><rect x="14" y="13" width="1" height="1" fill="#fff"/><rect x="15" y="13" width="1" height="1" fill="#000"/><rect x="4" y="14" width="1" height="1" fill="#000"/><rect x="5" y="14" width="10" height="1" fill="#fff"/><rect x="15" y="14" width="1" height="1" fill="#000"/><rect x="4" y="15" width="12" height="1" fill="#000"/></svg>
<span id="t57" class="t" style="top:281px;line-height:14px;font-weight:bold;-webkit-text-stroke:0.3px;left:537.5px;transform:scaleX(0.9695);transform-origin:left center;">Daň.povinnosť</span>
<div style="left:624px;top:278px;width:63px;height:19px;background:#fff;border:1px solid #7a7a7a"></div>
<span id="t58" class="t" style="top:281px;line-height:14px;left:627px;transform:scaleX(0.8900);transform-origin:left center;">18.12.2018</span>
<span id="t59" class="t" style="top:308px;line-height:14px;left:526px;transform:scaleX(0.8991);transform-origin:left center;">Mena</span>
<div style="left:554px;top:301px;width:28px;height:19px;background:#fff;border:1px solid #7a7a7a"></div>
<span id="t60" class="t" style="top:304px;line-height:14px;left:557px;transform:scaleX(0.8900);transform-origin:left center;">EUR</span>
<div style="left:585px;top:302px;width:21px;height:17px;background:#e1e1e1;border:1px solid #adadad"></div>
<svg style="left:589px;top:304px" width="16" height="16" viewBox="0 0 16 16" shape-rendering="crispEdges"><rect x="0" y="0" width="4" height="1" fill="#00ffff"/><rect x="4" y="0" width="9" height="1" fill="#000"/><rect x="0" y="1" width="3" height="1" fill="#00ffff"/><rect x="3" y="1" width="1" height="1" fill="#000"/><rect x="4" y="1" width="4" height="1" fill="#ffff00"/><rect x="8" y="1" width="2" height="1" fill="#000"/><rect x="10" y="1" width="2" height="1" fill="#fff"/><rect x="12" y="1" width="2" height="1" fill="#000"/><rect x="0" y="2" width="2" height="1" fill="#00ffff"/><rect x="2" y="2" width="1" height="1" fill="#000"/><rect x="3" y="2" width="1" height="1" fill="#ffff00"/><rect x="4" y="2" width="1" height="1" fill="#ffffff"/><rect x="5" y="2" width="1" height="1" fill="#ffff00"/><rect x="6" y="2" width="1" height="1" fill="#000"/><rect x="7" y="2" width="3" height="1" fill="#ffff00"/><rect x="10" y="2" width="1" height="1" fill="#000"/><rect x="11" y="2" width="1" height="1" fill="#fff"/><rect x="12" y="2" width="1" height="1" fill="#000"/><rect x="13" y="2" width="1" height="1" fill="#fff"/><rect x="14" y="2" width="1" height="1" fill="#000"/><rect x="0" y="3" width="1" height="1" fill="#00ffff"/><rect x="1" y="3" width="1" height="1" fill="#000"/><rect x="2" y="3" width="1" height="1" fill="#ffff00"/><rect x="3" y="3" width="1" height="1" fill="#ffffff"/><rect x="4" y="3" width="1" height="1" fill="#ffff00"/><rect x="5" y="3" width="1" height="1" fill="#ffffff"/><rect x="6" y="3" width="1" height="1" fill="#ffff00"/><rect x="7" y="3" width="3" height="1" fill="#000"/><rect x="10" y="3" width="2" height="1" fill="#fff"/><rect x="12" y="3" width="1" height="1" fill="#000"/><rect x="13" y="3" width="2" height="1" fill="#fff"/><rect x="15" y="3" width="1" height="1" fill="#000"/><rect x="0" y="4" width="2" height="1" fill="#000"/><rect x="2" y="4" width="1" height="1" fill="#ffffff"/><rect x="3" y="4" width="1" height="1" fill="#ffff00"/><rect x="4" y="4" width="1" height="1" fill="#ffffff"/><rect x="5" y="4" width="1" height="1" fill="#ffff00"/><rect x="6" y="4" width="1" height="1" fill="#ffffff"/><rect x="7" y="4" width="1" height="1" fill="#ffff00"/><rect x="8" y="4" width="2" height="1" fill="#000"/><rect x="10" y="4" width="2" height="1" fill="#fff"/><rect x="12" y="4" width="4" height="1" fill="#000"/><rect x="1" y="5" width="1" height="1" fill="#000"/><rect x="2" y="5" width="1" height="1" fill="#ffff00"/><rect x="3" y="5" width="1" height="1" fill="#ffffff"/><rect x="4" y="5" width="1" height="1" fill="#ffff00"/><rect x="5" y="5" width="1" height="1" fill="#ffffff"/><rect x="6" y="5" width="1" height="1" fill="#000"/><rect x="7" y="5" width="2" height="1" fill="#ffff00"/><rect x="9" y="5" width="2" height="1" fill="#000"/><rect x="11" y="5" width="4" height="1" fill="#fff"/><rect x="15" y="5" width="1" height="1" fill="#000"/><rect x="1" y="6" width="2" height="1" fill="#000"/><rect x="3" y="6" width="1" height="1" fill="#ffff00"/><rect x="4" y="6" width="1" height="1" fill="#ffffff"/><rect x="5" y="6" width="2" height="1" fill="#ffff00"/><rect x="7" y="6" width="1" height="1" fill="#000"/><rect x="8" y="6" width="2" height="1" fill="#ffff00"/><rect x="10" y="6" width="2" height="1" fill="#000"/><rect x="12" y="6" width="3" height="1" fill="#fff"/><rect x="15" y="6" width="1" height="1" fill="#000"/><rect x="2" y="7" width="2" height="1" fill="#000"/><rect x="4" y="7" width="1" height="1" fill="#ffff00"/><rect x="5" y="7" width="1" height="1" fill="#000"/><rect x="6" y="7" width="2" height="1" fill="#ffff00"/><rect x="8" y="7" width="1" height="1" fill="#000"/><rect x="9" y="7" width="2" height="1" fill="#ffff00"/><rect x="11" y="7" width="1" height="1" fill="#000"/><rect x="12" y="7" width="1" height="1" fill="#fff"/><rect x="13" y="7" width="1" height="1" fill="#000"/><rect x="14" y="7" width="1" height="1" fill="#fff"/><rect x="15" y="7" width="1" height="1" fill="#000"/><rect x="3" y="8" width="2" height="1" fill="#000"/><rect x="5" y="8" width="1" height="1" fill="#ffff00"/><rect x="6" y="8" width="2" height="1" fill="#000"/><rect x="8" y="8" width="1" height="1" fill="#fff"/><rect x="9" y="8" width="1" height="1" fill="#000"/><rect x="10" y="8" width="1" height="1" fill="#ffff00"/><rect x="11" y="8" width="1" height="1" fill="#000"/><rect x="12" y="8" width="3" height="1" fill="#fff"/><rect x="15" y="8" width="1" height="1" fill="#000"/><rect x="4" y="9" width="2" height="1" fill="#000"/><rect x="6" y="9" width="3" height="1" fill="#fff"/><rect x="9" y="9" width="3" height="1" fill="#000"/><rect x="12" y="9" width="1" height="1" fill="#fff"/><rect x="13" y="9" width="1" height="1" fill="#000"/><rect x="14" y="9" width="1" height="1" fill="#fff"/><rect x="15" y="9" width="1" height="1" fill="#000"/><rect x="4" y="10" width="1" height="1" fill="#000"/><rect x="5" y="10" width="10" height="1" fill="#fff"/><rect x="15" y="10" width="1" height="1" fill="#000"/><rect x="4" y="11" width="1" height="1" fill="#000"/><rect x="5" y="11" width="1" height="1" fill="#fff"/><rect x="6" y="11" width="2" height="1" fill="#000"/><rect x="8" y="11" width="1" height="1" fill="#fff"/><rect x="9" y="11" width="2" height="1" fill="#000"/><rect x="11" y="11" width="1" height="1" fill="#fff"/><rect x="12" y="11" width="2" height="1" fill="#000"/><rect x="14" y="11" width="1" height="1" fill="#fff"/><rect x="15" y="11" width="1" height="1" fill="#000"/><rect x="4" y="12" width="1" height="1" fill="#000"/><rect x="5" y="12" width="10" height="1" fill="#fff"/><rect x="15" y="12" width="1" height="1" fill="#000"/><rect x="4" y="13" width="1" height="1" fill="#000"/><rect x="5" y="13" width="1" height="1" fill="#fff"/><rect x="6" y="13" width="3" height="1" fill="#000"/><rect x="9" y="13" width="1" height="1" fill="#fff"/><rect x="10" y="13" width="1" height="1" fill="#000"/><rect x="11" y="13" width="1" height="1" fill="#fff"/><rect x="12" y="13" width="2" height="1" fill="#000"/><rect x="14" y="13" width="1" height="1" fill="#fff"/><rect x="15" y="13" width="1" height="1" fill="#000"/><rect x="4" y="14" width="1" height="1" fill="#000"/><rect x="5" y="14" width="10" height="1" fill="#fff"/><rect x="15" y="14" width="1" height="1" fill="#000"/><rect x="4" y="15" width="12" height="1" fill="#000"/></svg>
<span id="t61" class="t" style="top:308px;line-height:14px;left:610.5px;transform:scaleX(0.8304);transform-origin:left center;">Kurz</span>
<div style="left:623px;top:303px;width:7px;height:7px;background:#e1e1e1;border:1px solid #adadad;box-sizing:border-box;"></div>
<div style="left:632px;top:301px;width:60px;height:19px;background:#fff;border:1px solid #7a7a7a"></div>
<span id="t62" class="t" style="top:304px;line-height:14px;right:273px;transform:scaleX(0.8900);transform-origin:right center;">1,0000</span>
<div style="left:315px;top:333px;width:272px;height:57px;background:#c0dcc0;"></div>
<div style="left:315px;top:339px;width:271px;height:1px;background:#d6e4d6;"></div>
<div style="left:320px;top:334px;width:27px;height:12px;background:#c0dcc0;"></div>
<span id="t63" class="t" style="top:333px;line-height:14px;left:322.5px;transform:scaleX(0.8681);transform-origin:left center;">DPH</span>
<span id="t64" class="t" style="top:347px;line-height:14px;left:318.5px;transform:scaleX(0.8525);transform-origin:left center;">Režim</span>
<div style="left:363px;top:344px;width:217px;height:20px;background:#cccccc;border:1px solid #bfbfbf"></div>
<span id="t65" class="t" style="top:348px;line-height:14px;color:#6d6d6d;left:367.5px;transform:scaleX(0.8539);transform-origin:left center;">Bežný tuzemský režim</span>
<svg style="left:567px;top:350px" width="12" height="8" viewBox="0 0 12 8"><path d="M1.5 2 L6 6.5 L10.5 2" fill="none" stroke="#8a8a8a" stroke-width="1"/></svg>
<div style="left:886px;top:40px;width:67px;height:21px;background:#e1e1e1;border:1px solid #adadad"></div>
<span id="t66" class="t" style="top:45px;line-height:14px;left:770.5px;width:300px;text-align:center;transform:scaleX(0.8900);transform-origin:center center;"><u>O</u>K</span>
<div style="left:886px;top:68px;width:67px;height:21px;background:#e1e1e1;border:1px solid #adadad"></div>
<span id="t67" class="t" style="top:73px;line-height:14px;left:770.5px;width:300px;text-align:center;transform:scaleX(0.8900);transform-origin:center center;">Storno</span>
<div style="left:886px;top:120px;width:67px;height:21px;background:#e1e1e1;border:1px solid #adadad"></div>
<span id="t68" class="t" style="top:125px;line-height:14px;left:770.5px;width:300px;text-align:center;transform:scaleX(0.8900);transform-origin:center center;">O<u>b</u>jednávky</span>
<div style="left:886px;top:145px;width:67px;height:21px;background:#e1e1e1;border:1px solid #adadad"></div>
<span id="t69" class="t" style="top:150px;line-height:14px;left:770.5px;width:300px;text-align:center;transform:scaleX(0.8900);transform-origin:center center;">Sklad</span>
<div style="left:886px;top:170px;width:67px;height:21px;background:#e1e1e1;border:1px solid #adadad"></div>
<span id="t70" class="t" style="top:175px;line-height:14px;left:770.5px;width:300px;text-align:center;transform:scaleX(0.8900);transform-origin:center center;">Funkcie</span>
<div style="left:886px;top:195px;width:67px;height:21px;background:#e1e1e1;border:1px solid #adadad"></div>
<span id="t71" class="t" style="top:200px;line-height:14px;left:770.5px;width:300px;text-align:center;transform:scaleX(0.8900);transform-origin:center center;"><u>H</u>ľadanie</span>
<div style="left:1px;top:404px;width:960px;height:1px;background:#fff;"></div>
<div style="left:3px;top:426px;width:955px;height:320px;background:#fff;"></div>
<div style="left:2px;top:425px;width:957px;height:1px;background:#d9d9d9;"></div>
<div style="left:958px;top:425px;width:1px;height:322px;background:#d9d9d9;"></div>
<div style="left:2px;top:425px;width:1px;height:322px;background:#d9d9d9;"></div>
<div style="left:2px;top:746px;width:957px;height:1px;background:#d9d9d9;"></div>
<div style="left:1px;top:747px;width:961px;height:1px;background:#a0a0a0;"></div>
<div style="left:54px;top:407px;width:47px;height:19px;background:#f0f0f0;border:1px solid #d9d9d9;border-bottom:none;box-sizing:border-box;"></div>
<span id="t72" class="t" style="top:410px;line-height:14px;left:-72.5px;width:300px;text-align:center;transform:scaleX(0.8900);transform-origin:center center;">Detai<u>l</u> I.</span>
<div style="left:100px;top:407px;width:52px;height:19px;background:#f0f0f0;border:1px solid #d9d9d9;border-bottom:none;box-sizing:border-box;"></div>
<span id="t73" class="t" style="top:410px;line-height:14px;left:-24.0px;width:300px;text-align:center;transform:scaleX(0.8900);transform-origin:center center;">Detail II.</span>
<div style="left:151px;top:407px;width:115px;height:19px;background:#f0f0f0;border:1px solid #d9d9d9;border-bottom:none;box-sizing:border-box;"></div>
<span id="t74" class="t" style="top:410px;line-height:14px;left:58.5px;width:300px;text-align:center;transform:scaleX(0.8900);transform-origin:center center;"><u>K</u>onečný príjemca FA</span>
<div style="left:265px;top:407px;width:87px;height:19px;background:#f0f0f0;border:1px solid #d9d9d9;border-bottom:none;box-sizing:border-box;"></div>
<span id="t75" class="t" style="top:410px;line-height:14px;left:158.5px;width:300px;text-align:center;transform:scaleX(0.8900);transform-origin:center center;">Celkové čias<u>t</u>ky</span>
<div style="left:351px;top:407px;width:64px;height:19px;background:#f0f0f0;border:1px solid #d9d9d9;border-bottom:none;box-sizing:border-box;"></div>
<span id="t76" class="t" style="top:410px;line-height:14px;left:233.0px;width:300px;text-align:center;transform:scaleX(0.8900);transform-origin:center center;">Poznámk<u>a</u></span>
<div style="left:414px;top:407px;width:47px;height:19px;background:#f0f0f0;border:1px solid #d9d9d9;border-bottom:none;box-sizing:border-box;"></div>
<span id="t77" class="t" style="top:410px;line-height:14px;left:287.5px;width:300px;text-align:center;transform:scaleX(0.8900);transform-origin:center center;">Úhrady</span>
<div style="left:460px;top:407px;width:72px;height:19px;background:#f0f0f0;border:1px solid #d9d9d9;border-bottom:none;box-sizing:border-box;"></div>
<span id="t78" class="t" style="top:410px;line-height:14px;left:346.0px;width:300px;text-align:center;transform:scaleX(0.8900);transform-origin:center center;">Zaúčtova<u>n</u>ie</span>
<div style="left:531px;top:407px;width:46px;height:19px;background:#f0f0f0;border:1px solid #d9d9d9;border-bottom:none;box-sizing:border-box;"></div>
<span id="t79" class="t" style="top:410px;line-height:14px;left:404.0px;width:300px;text-align:center;transform:scaleX(0.8900);transform-origin:center center;">Prílohy</span>
<div style="left:576px;top:407px;width:46px;height:19px;background:#f0f0f0;border:1px solid #d9d9d9;border-bottom:none;box-sizing:border-box;"></div>
<span id="t80" class="t" style="top:410px;line-height:14px;left:449.0px;width:300px;text-align:center;transform:scaleX(0.8900);transform-origin:center center;">Splátky</span>
<div style="left:2px;top:405px;width:53px;height:23px;background:#fff;border:1px solid #d9d9d9;border-bottom:none;box-sizing:border-box;"></div>
<span id="t81" class="t" style="top:408px;line-height:14px;left:14px;transform:scaleX(0.8803);transform-origin:left center;"><u>P</u>oložky</span>
<div style="left:7px;top:430px;width:950px;height:313px;background:#f0f0f0;"></div>
<div style="left:956px;top:430px;width:1px;height:100px;background:#828282;"></div>
<div style="left:10px;top:436px;width:19px;height:18px;background:#e1e1e1;border:1px solid #adadad"></div>
<span id="t82" class="t" style="top:438px;line-height:20px;font-size:18px;font-weight:bold;-webkit-text-stroke:0.3px;color:#0000c8;font-family:'Liberation Serif', serif;left:15.5px;">?</span>
<div style="left:36px;top:435px;width:24px;height:21px;background:#e1e1e1;border:1px solid #adadad"></div>
<div style="left:64px;top:435px;width:24px;height:21px;background:#e1e1e1;border:1px solid #adadad"></div>
<div style="left:92px;top:435px;width:24px;height:21px;background:#e1e1e1;border:1px solid #adadad"></div>
<div style="left:120px;top:435px;width:24px;height:21px;background:#e1e1e1;border:1px solid #adadad"></div>
<div style="left:148px;top:435px;width:24px;height:21px;background:#e1e1e1;border:1px solid #adadad"></div>
<div style="left:176px;top:435px;width:24px;height:21px;background:#e1e1e1;border:1px solid #adadad"></div>
<div style="left:204px;top:435px;width:24px;height:21px;background:#e1e1e1;border:1px solid #adadad"></div>
<div style="left:232px;top:435px;width:24px;height:21px;background:#cccccc;border:1px solid #bfbfbf"></div>
<svg style="left:36px;top:435px" width="230" height="23" viewBox="0 0 230 23"><g fill="#000"><rect x="8" y="7.5" width="2" height="8"/><path d="M18 7.5 L18 15.5 L10.5 11.5 Z"/><path d="M44.8 7.5 L44.8 15.5 L37.8 11.5 Z"/><path d="M65.5 7.5 L65.5 15.5 L72.5 11.5 Z"/><path d="M92 7.5 L92 15.5 L99.5 11.5 Z"/><rect x="100" y="7.5" width="2" height="8"/><rect x="120" y="10" width="10" height="3"/><rect x="123.5" y="6.5" width="3" height="10"/><rect x="148" y="10" width="10" height="3"/><path d="M176 14 L186 14 L181 8.5 Z"/></g><path d="M204 12.5 L207 15.5 L214.5 7" fill="none" stroke="#fff" stroke-width="1.6"/><path d="M205 13.5 L208 16.5 L215.5 8" fill="none" stroke="#a8a8a8" stroke-width="0.8"/></svg>
<div style="left:260px;top:431px;width:1px;height:29px;background:#fff;"></div>
<span id="t83" class="t" style="top:439px;line-height:14px;left:278.5px;transform:scaleX(0.8623);transform-origin:left center;">Položiek:  5</span>
<div style="left:362px;top:431px;width:1px;height:30px;background:#a0a0a0;"></div>
<div style="left:363px;top:431px;width:1px;height:30px;background:#fff;"></div>
<span id="t84" class="t" style="top:439px;line-height:14px;left:370.5px;transform:scaleX(0.9089);transform-origin:left center;">Zľava za položky</span>
<div style="left:456px;top:437px;width:66px;height:17px;background:#f0f0f0;border:1px solid;border-color:#a0a0a0 #fff #fff #a0a0a0;box-shadow:inset 1px 1px 0 #e3e3e3"></div>
<div style="left:525px;top:431px;width:1px;height:30px;background:#a0a0a0;"></div>
<div style="left:526px;top:431px;width:1px;height:30px;background:#fff;"></div>
<div style="left:531px;top:435px;width:67px;height:21px;background:#e1e1e1;border:1px solid #adadad"></div>
<span id="t85" class="t" style="top:440px;line-height:14px;left:415.5px;width:300px;text-align:center;transform:scaleX(0.8900);transform-origin:center center;">Zotried.pol.</span>
<div style="left:603px;top:435px;width:129px;height:21px;background:#e1e1e1;border:1px solid #adadad"></div>
<span id="t86" class="t" style="top:440px;line-height:14px;left:518.5px;width:300px;text-align:center;transform:scaleX(0.8900);transform-origin:center center;">Odpočet záloh [Ctrl+Z]</span>
<div style="left:814px;top:433px;width:134px;height:23px;background:#f0f0f0;border:1px solid;border-color:#fff #a0a0a0 #a0a0a0 #fff"></div>
<div style="left:820px;top:440px;width:11px;height:11px;background:#fff;border:1px solid #333"></div>
<span id="t87" class="t" style="top:440px;line-height:14px;left:835.5px;transform:scaleX(0.9046);transform-origin:left center;">Zadávanie cien s DPH</span>
<div style="left:7px;top:460px;width:950px;height:1px;background:#a0a0a0;"></div>
<div style="left:7px;top:461px;width:950px;height:1px;background:#fff;"></div>
<span id="t88" class="t" style="top:467px;line-height:14px;font-weight:bold;-webkit-text-stroke:0.3px;left:11px;transform:scaleX(1.0067);transform-origin:left center;"><u>P</u>oložky: Text</span>
<div style="left:95px;top:465px;width:398px;height:19px;background:#fff;border:1px solid #7a7a7a"></div>
<span id="t89" class="t" style="top:468px;line-height:14px;left:98px;transform:scaleX(0.8900);transform-origin:left center;">Tovar bez samozdanenia</span>
<div style="left:877px;top:469px;width:11px;height:11px;background:#fff;border:1px solid #333"></div>
<span id="t90" class="t" style="top:469px;line-height:14px;left:894px;transform:scaleX(0.8898);transform-origin:left center;">Te<u>x</u>t.r.</span>
<span id="t91" class="t" style="top:489px;line-height:14px;font-weight:bold;-webkit-text-stroke:0.3px;left:10.5px;transform:scaleX(0.8697);transform-origin:left center;">MJ</span>
<span id="t92" class="t" style="top:489px;line-height:14px;font-weight:bold;-webkit-text-stroke:0.3px;left:43.5px;transform:scaleX(0.9775);transform-origin:left center;">Počet MJ</span>
<span id="t93" class="t" style="top:489px;line-height:14px;font-weight:bold;-webkit-text-stroke:0.3px;left:113.5px;transform:scaleX(0.9932);transform-origin:left center;">Cena MJ EUR</span>
<span id="t94" class="t" style="top:489px;line-height:14px;font-weight:bold;-webkit-text-stroke:0.3px;left:197px;transform:scaleX(0.9440);transform-origin:left center;">%DPH</span>
<span id="t95" class="t" style="top:489px;line-height:14px;font-weight:bold;-webkit-text-stroke:0.3px;left:238px;transform:scaleX(1.0081);transform-origin:left center;">Zľava%</span>
<span id="t96" class="t" style="top:489px;line-height:14px;font-weight:bold;-webkit-text-stroke:0.3px;left:292px;transform:scaleX(0.9579);transform-origin:left center;">Celkom EUR</span>
<span id="t97" class="t" style="top:489px;line-height:14px;font-weight:bold;-webkit-text-stroke:0.3px;left:364.5px;transform:scaleX(0.9534);transform-origin:left center;">Typ</span>
<span id="t98" class="t" style="top:489px;line-height:14px;font-weight:bold;-webkit-text-stroke:0.3px;left:400.5px;transform:scaleX(0.9600);transform-origin:left center;">Stredisko</span>
<span id="t99" class="t" style="top:489px;line-height:14px;font-weight:bold;-webkit-text-stroke:0.3px;left:480px;transform:scaleX(1.0492);transform-origin:left center;">Zákazka</span>
<span id="t100" class="t" style="top:489px;line-height:14px;font-weight:bold;-webkit-text-stroke:0.3px;left:530px;transform:scaleX(0.9177);transform-origin:left center;">Hmotnosť</span>
<span id="t101" class="t" style="top:489px;line-height:14px;font-weight:bold;-webkit-text-stroke:0.3px;left:604.5px;transform:scaleX(1.0091);transform-origin:left center;">Skl.karta</span>
<span id="t102" class="t" style="top:489px;line-height:14px;font-weight:bold;-webkit-text-stroke:0.3px;left:670px;transform:scaleX(0.9364);transform-origin:left center;">Typ DPH</span>
<div style="left:7px;top:504px;width:31px;height:19px;background:#fff;border:1px solid #7a7a7a"></div>
<div style="left:40px;top:504px;width:76px;height:19px;background:#fff;border:1px solid #7a7a7a"></div>
<span id="t103" class="t" style="top:507px;line-height:14px;right:849px;transform:scaleX(0.8900);transform-origin:right center;">1,000</span>
<div style="left:118px;top:504px;width:76px;height:19px;background:#fff;border:1px solid #7a7a7a"></div>
<span id="t104" class="t" style="top:507px;line-height:14px;right:771px;transform:scaleX(0.8900);transform-origin:right center;">200,00</span>
<div style="left:196px;top:504px;width:35px;height:19px;background:#fff;border:1px solid #7a7a7a"></div>
<span id="t105" class="t" style="top:507px;line-height:14px;right:734px;transform:scaleX(0.8900);transform-origin:right center;">20%</span>
<div style="left:233px;top:504px;width:48px;height:19px;background:#fff;border:1px solid #7a7a7a"></div>
<div style="left:283px;top:504px;width:78px;height:19px;background:#f0f0f0;border:1px solid #e3e3e3"></div>
<span id="t106" class="t" style="top:507px;line-height:14px;color:#6d6d6d;right:604px;transform:scaleX(0.8900);transform-origin:right center;">240,00</span>
<div style="left:363px;top:504px;width:26px;height:19px;background:#fff;border:1px solid #7a7a7a"></div>
<span id="t107" class="t" style="top:507px;line-height:14px;left:366px;transform:scaleX(0.8900);transform-origin:left center;">T</span>
<div style="left:391px;top:504px;width:64px;height:19px;background:#fff;border:1px solid #7a7a7a"></div>
<span id="t108" class="t" style="top:507px;line-height:14px;left:394px;transform:scaleX(0.8900);transform-origin:left center;">0</span>
<div style="left:457px;top:504px;width:71px;height:19px;background:#fff;border:1px solid #7a7a7a"></div>
<span id="t109" class="t" style="top:507px;line-height:14px;left:460px;transform:scaleX(0.8900);transform-origin:left center;">0</span>
<div style="left:530px;top:504px;width:70px;height:19px;background:#fff;border:1px solid #7a7a7a"></div>
<div style="left:603px;top:504px;width:60px;height:19px;background:#f0f0f0;border:1px solid #e3e3e3"></div>
<div style="left:669px;top:504px;width:20px;height:19px;background:#fff;border:1px solid #7a7a7a"></div>
<span id="t110" class="t" style="top:507px;line-height:14px;right:276px;transform:scaleX(0.8900);transform-origin:right center;">40</span>
<div style="left:940px;top:463px;width:17px;height:66px;background:#f0f0f0;"></div>
<svg style="left:943px;top:467px" width="9" height="9" viewBox="0 0 9 9"><path d="M1 6 L4.5 2.5 L8 6" fill="none" stroke="#505050" stroke-width="1.9"/></svg>
<svg style="left:943px;top:517px" width="9" height="9" viewBox="0 0 9 9"><path d="M1 2.5 L4.5 6 L8 2.5" fill="none" stroke="#505050" stroke-width="1.9"/></svg>
<div style="left:940px;top:480px;width:16px;height:17px;background:#cdcdcd;"></div>
<div style="left:6px;top:530px;width:951px;height:213px;background:#f0f0f0;"></div>
<div style="left:6px;top:530px;width:951px;height:1px;background:#a0a0a4;"></div>
<div style="left:6px;top:530px;width:1px;height:213px;background:#a0a0a4;"></div>
<div style="left:6px;top:742px;width:951px;height:1px;background:#a0a0a4;"></div>
<div style="left:956px;top:530px;width:1px;height:213px;background:#a0a0a4;"></div>
<div style="left:7px;top:531px;width:949px;height:1px;background:#fff;"></div>
<div style="left:7px;top:531px;width:1px;height:211px;background:#fff;"></div>
<div style="left:8px;top:550px;width:929px;height:1px;background:#000;"></div>
<div style="left:19px;top:532px;width:1px;height:18px;background:#000;"></div>
<div style="left:8px;top:532px;width:1px;height:18px;background:#fff;"></div>
<div style="left:449px;top:532px;width:1px;height:18px;background:#000;"></div>
<div style="left:20px;top:532px;width:1px;height:18px;background:#fff;"></div>
<div style="left:476px;top:532px;width:1px;height:18px;background:#000;"></div>
<div style="left:450px;top:532px;width:1px;height:18px;background:#fff;"></div>
<div style="left:541px;top:532px;width:1px;height:18px;background:#000;"></div>
<div style="left:477px;top:532px;width:1px;height:18px;background:#fff;"></div>
<div style="left:645px;top:532px;width:1px;height:18px;background:#000;"></div>
<div style="left:542px;top:532px;width:1px;height:18px;background:#fff;"></div>
<div style="left:682px;top:532px;width:1px;height:18px;background:#000;"></div>
<div style="left:646px;top:532px;width:1px;height:18px;background:#fff;"></div>
<div style="left:816px;top:532px;width:1px;height:18px;background:#000;"></div>
<div style="left:683px;top:532px;width:1px;height:18px;background:#fff;"></div>
<div style="left:881px;top:532px;width:1px;height:18px;background:#000;"></div>
<div style="left:817px;top:532px;width:1px;height:18px;background:#fff;"></div>
<div style="left:936px;top:532px;width:1px;height:18px;background:#000;"></div>
<div style="left:882px;top:532px;width:1px;height:18px;background:#fff;"></div>
<div style="left:8px;top:532px;width:929px;height:1px;background:#fff;"></div>
<span id="t111" class="t" style="top:535px;line-height:14px;font-weight:bold;-webkit-text-stroke:0.3px;left:23px;transform:scaleX(1.0085);transform-origin:left center;">Text</span>
<span id="t112" class="t" style="top:535px;line-height:14px;font-weight:bold;-webkit-text-stroke:0.3px;left:453px;transform:scaleX(0.8397);transform-origin:left center;">MJ</span>
<span id="t113" class="t" style="top:535px;line-height:14px;font-weight:bold;-webkit-text-stroke:0.3px;left:480px;transform:scaleX(0.9775);transform-origin:left center;">Počet MJ</span>
<span id="t114" class="t" style="top:535px;line-height:14px;font-weight:bold;-webkit-text-stroke:0.3px;left:545px;transform:scaleX(0.9996);transform-origin:left center;">Cena MJ EUR</span>
<span id="t115" class="t" style="top:535px;line-height:14px;font-weight:bold;-webkit-text-stroke:0.3px;left:649px;transform:scaleX(0.7496);transform-origin:left center;">%</span>
<span id="t116" class="t" style="top:535px;line-height:14px;font-weight:bold;-webkit-text-stroke:0.3px;left:686px;transform:scaleX(0.9997);transform-origin:left center;">Celkom bez DPH EUR</span>
<span id="t117" class="t" style="top:535px;line-height:14px;font-weight:bold;-webkit-text-stroke:0.3px;left:821px;transform:scaleX(1.0076);transform-origin:left center;">Typ DPH</span>
<span id="t118" class="t" style="top:535px;line-height:14px;font-weight:bold;-webkit-text-stroke:0.3px;left:885px;transform:scaleX(0.9865);transform-origin:left center;">Typ pol.</span>
<div style="left:20px;top:551px;width:916px;height:17px;background:#3399ff;"></div>
<div style="left:20px;top:568px;width:917px;height:1px;background:#c0c0c0;"></div>
<div style="left:449px;top:551px;width:1px;height:18px;background:#c0c0c0;"></div>
<div style="left:476px;top:551px;width:1px;height:18px;background:#c0c0c0;"></div>
<div style="left:541px;top:551px;width:1px;height:18px;background:#c0c0c0;"></div>
<div style="left:645px;top:551px;width:1px;height:18px;background:#c0c0c0;"></div>
<div style="left:682px;top:551px;width:1px;height:18px;background:#c0c0c0;"></div>
<div style="left:816px;top:551px;width:1px;height:18px;background:#c0c0c0;"></div>
<div style="left:881px;top:551px;width:1px;height:18px;background:#c0c0c0;"></div>
<div style="left:936px;top:551px;width:1px;height:18px;background:#c0c0c0;"></div>
<div style="left:8px;top:568px;width:12px;height:1px;background:#000;"></div>
<div style="left:19px;top:551px;width:1px;height:18px;background:#000;"></div>
<div style="left:8px;top:551px;width:1px;height:17px;background:#fff;"></div>
<span id="t119" class="t" style="top:553px;line-height:14px;color:#fff;left:23px;transform:scaleX(0.8844);transform-origin:left center;">Tovar bez samozdanenia</span>
<span id="t120" class="t" style="top:553px;line-height:14px;color:#fff;right:424px;transform:scaleX(0.8900);transform-origin:right center;">1,000</span>
<span id="t121" class="t" style="top:553px;line-height:14px;color:#fff;right:320.5px;transform:scaleX(0.8900);transform-origin:right center;">200,00</span>
<span id="t122" class="t" style="top:553px;line-height:14px;color:#fff;right:283.5px;transform:scaleX(0.8900);transform-origin:right center;">20%</span>
<span id="t123" class="t" style="top:553px;line-height:14px;color:#fff;right:149px;transform:scaleX(0.8900);transform-origin:right center;">200,00</span>
<span id="t124" class="t" style="top:553px;line-height:14px;color:#fff;right:85px;transform:scaleX(0.8900);transform-origin:right center;">40</span>
<span id="t125" class="t" style="top:553px;line-height:14px;color:#fff;left:884.5px;transform:scaleX(0.8900);transform-origin:left center;">T</span>
<div style="left:20px;top:586px;width:917px;height:1px;background:#c0c0c0;"></div>
<div style="left:449px;top:569px;width:1px;height:18px;background:#c0c0c0;"></div>
<div style="left:476px;top:569px;width:1px;height:18px;background:#c0c0c0;"></div>
<div style="left:541px;top:569px;width:1px;height:18px;background:#c0c0c0;"></div>
<div style="left:645px;top:569px;width:1px;height:18px;background:#c0c0c0;"></div>
<div style="left:682px;top:569px;width:1px;height:18px;background:#c0c0c0;"></div>
<div style="left:816px;top:569px;width:1px;height:18px;background:#c0c0c0;"></div>
<div style="left:881px;top:569px;width:1px;height:18px;background:#c0c0c0;"></div>
<div style="left:936px;top:569px;width:1px;height:18px;background:#c0c0c0;"></div>
<div style="left:8px;top:586px;width:12px;height:1px;background:#000;"></div>
<div style="left:19px;top:569px;width:1px;height:18px;background:#000;"></div>
<div style="left:8px;top:569px;width:1px;height:17px;background:#fff;"></div>
<div style="left:8px;top:569px;width:11px;height:1px;background:#fff;"></div>
<span id="t126" class="t" style="top:571px;line-height:14px;left:23px;transform:scaleX(0.8822);transform-origin:left center;">Stavebné práce (samozdanenie)</span>
<span id="t127" class="t" style="top:571px;line-height:14px;right:424px;transform:scaleX(0.8900);transform-origin:right center;">1,000</span>
<span id="t128" class="t" style="top:571px;line-height:14px;right:320.5px;transform:scaleX(0.8900);transform-origin:right center;">5 000,00</span>
<span id="t129" class="t" style="top:571px;line-height:14px;right:283.5px;transform:scaleX(0.8900);transform-origin:right center;">20%</span>
<span id="t130" class="t" style="top:571px;line-height:14px;right:149px;transform:scaleX(0.8900);transform-origin:right center;">5 000,00</span>
<span id="t131" class="t" style="top:571px;line-height:14px;right:85px;transform:scaleX(0.8900);transform-origin:right center;">46</span>
<span id="t132" class="t" style="top:571px;line-height:14px;left:884.5px;transform:scaleX(0.8900);transform-origin:left center;">SP</span>
<div style="left:20px;top:604px;width:917px;height:1px;background:#c0c0c0;"></div>
<div style="left:449px;top:587px;width:1px;height:18px;background:#c0c0c0;"></div>
<div style="left:476px;top:587px;width:1px;height:18px;background:#c0c0c0;"></div>
<div style="left:541px;top:587px;width:1px;height:18px;background:#c0c0c0;"></div>
<div style="left:645px;top:587px;width:1px;height:18px;background:#c0c0c0;"></div>
<div style="left:682px;top:587px;width:1px;height:18px;background:#c0c0c0;"></div>
<div style="left:816px;top:587px;width:1px;height:18px;background:#c0c0c0;"></div>
<div style="left:881px;top:587px;width:1px;height:18px;background:#c0c0c0;"></div>
<div style="left:936px;top:587px;width:1px;height:18px;background:#c0c0c0;"></div>
<div style="left:8px;top:604px;width:12px;height:1px;background:#000;"></div>
<div style="left:19px;top:587px;width:1px;height:18px;background:#000;"></div>
<div style="left:8px;top:587px;width:1px;height:17px;background:#fff;"></div>
<div style="left:8px;top:587px;width:11px;height:1px;background:#fff;"></div>
<span id="t133" class="t" style="top:589px;line-height:14px;left:23px;transform:scaleX(0.8767);transform-origin:left center;">Poľnohospodárske plodiny (samozdanenie)</span>
<span id="t134" class="t" style="top:589px;line-height:14px;right:424px;transform:scaleX(0.8900);transform-origin:right center;">1,000</span>
<span id="t135" class="t" style="top:589px;line-height:14px;right:320.5px;transform:scaleX(0.8900);transform-origin:right center;">30,00</span>
<span id="t136" class="t" style="top:589px;line-height:14px;right:283.5px;transform:scaleX(0.8900);transform-origin:right center;">20%</span>
<span id="t137" class="t" style="top:589px;line-height:14px;right:149px;transform:scaleX(0.8900);transform-origin:right center;">30,00</span>
<span id="t138" class="t" style="top:589px;line-height:14px;right:85px;transform:scaleX(0.8900);transform-origin:right center;">46</span>
<span id="t139" class="t" style="top:589px;line-height:14px;left:884.5px;transform:scaleX(0.8900);transform-origin:left center;">PP</span>
<div style="left:20px;top:622px;width:917px;height:1px;background:#c0c0c0;"></div>
<div style="left:449px;top:605px;width:1px;height:18px;background:#c0c0c0;"></div>
<div style="left:476px;top:605px;width:1px;height:18px;background:#c0c0c0;"></div>
<div style="left:541px;top:605px;width:1px;height:18px;background:#c0c0c0;"></div>
<div style="left:645px;top:605px;width:1px;height:18px;background:#c0c0c0;"></div>
<div style="left:682px;top:605px;width:1px;height:18px;background:#c0c0c0;"></div>
<div style="left:816px;top:605px;width:1px;height:18px;background:#c0c0c0;"></div>
<div style="left:881px;top:605px;width:1px;height:18px;background:#c0c0c0;"></div>
<div style="left:936px;top:605px;width:1px;height:18px;background:#c0c0c0;"></div>
<div style="left:8px;top:622px;width:12px;height:1px;background:#000;"></div>
<div style="left:19px;top:605px;width:1px;height:18px;background:#000;"></div>
<div style="left:8px;top:605px;width:1px;height:17px;background:#fff;"></div>
<div style="left:8px;top:605px;width:11px;height:1px;background:#fff;"></div>
<span id="t140" class="t" style="top:607px;line-height:14px;left:23px;transform:scaleX(0.9035);transform-origin:left center;">Tovar bez odpočtu DPH</span>
<span id="t141" class="t" style="top:607px;line-height:14px;right:424px;transform:scaleX(0.8900);transform-origin:right center;">1,000</span>
<span id="t142" class="t" style="top:607px;line-height:14px;right:320.5px;transform:scaleX(0.8900);transform-origin:right center;">12,50</span>
<span id="t143" class="t" style="top:607px;line-height:14px;right:283.5px;transform:scaleX(0.8900);transform-origin:right center;">20%</span>
<span id="t144" class="t" style="top:607px;line-height:14px;right:149px;transform:scaleX(0.8900);transform-origin:right center;">12,50</span>
<span id="t145" class="t" style="top:607px;line-height:14px;right:85px;transform:scaleX(0.8900);transform-origin:right center;">41</span>
<span id="t146" class="t" style="top:607px;line-height:14px;left:884.5px;transform:scaleX(0.8900);transform-origin:left center;">T</span>
<div style="left:20px;top:640px;width:917px;height:1px;background:#c0c0c0;"></div>
<div style="left:449px;top:623px;width:1px;height:18px;background:#c0c0c0;"></div>
<div style="left:476px;top:623px;width:1px;height:18px;background:#c0c0c0;"></div>
<div style="left:541px;top:623px;width:1px;height:18px;background:#c0c0c0;"></div>
<div style="left:645px;top:623px;width:1px;height:18px;background:#c0c0c0;"></div>
<div style="left:682px;top:623px;width:1px;height:18px;background:#c0c0c0;"></div>
<div style="left:816px;top:623px;width:1px;height:18px;background:#c0c0c0;"></div>
<div style="left:881px;top:623px;width:1px;height:18px;background:#c0c0c0;"></div>
<div style="left:936px;top:623px;width:1px;height:18px;background:#c0c0c0;"></div>
<div style="left:8px;top:640px;width:12px;height:1px;background:#000;"></div>
<div style="left:19px;top:623px;width:1px;height:18px;background:#000;"></div>
<div style="left:8px;top:623px;width:1px;height:17px;background:#fff;"></div>
<div style="left:8px;top:623px;width:11px;height:1px;background:#fff;"></div>
<span id="t147" class="t" style="top:625px;line-height:14px;left:23px;transform:scaleX(0.8961);transform-origin:left center;">Tovar podľa par.11  (samozdanenie)</span>
<span id="t148" class="t" style="top:625px;line-height:14px;right:424px;transform:scaleX(0.8900);transform-origin:right center;">1,000</span>
<span id="t149" class="t" style="top:625px;line-height:14px;right:320.5px;transform:scaleX(0.8900);transform-origin:right center;">99,00</span>
<span id="t150" class="t" style="top:625px;line-height:14px;right:283.5px;transform:scaleX(0.8900);transform-origin:right center;">20%</span>
<span id="t151" class="t" style="top:625px;line-height:14px;right:149px;transform:scaleX(0.8900);transform-origin:right center;">99,00</span>
<span id="t152" class="t" style="top:625px;line-height:14px;right:85px;transform:scaleX(0.8900);transform-origin:right center;">49</span>
<span id="t153" class="t" style="top:625px;line-height:14px;left:884.5px;transform:scaleX(0.8900);transform-origin:left center;">T</span>
<svg style="left:9px;top:554px" width="8" height="12" viewBox="0 0 8 12"><path d="M1.5 0.5 L1.5 11.5 L7 6 Z" fill="#000"/></svg>
<div style="left:940px;top:531px;width:16px;height:194px;background:#f0f0f0;"></div>
<div style="left:939px;top:551px;width:1px;height:173px;background:#fff;"></div>
<svg style="left:943px;top:537px" width="9" height="9" viewBox="0 0 9 9"><path d="M1 6 L4.5 2.5 L8 6" fill="none" stroke="#505050" stroke-width="1.9"/></svg>
<svg style="left:943px;top:712px" width="9" height="9" viewBox="0 0 9 9"><path d="M1 2.5 L4.5 6 L8 2.5" fill="none" stroke="#505050" stroke-width="1.9"/></svg>
<div style="left:940px;top:550px;width:16px;height:87px;background:#cdcdcd;"></div>
<div style="left:8px;top:725px;width:932px;height:17px;background:#f0f0f0;"></div>
<div style="left:8px;top:724px;width:932px;height:1px;background:#fff;"></div>
<svg style="left:12px;top:728px" width="9" height="9" viewBox="0 0 9 9"><path d="M6 1 L2.5 4.5 L6 8" fill="none" stroke="#505050" stroke-width="1.9"/></svg>
<svg style="left:926px;top:728px" width="9" height="9" viewBox="0 0 9 9"><path d="M2.5 1 L6 4.5 L2.5 8" fill="none" stroke="#505050" stroke-width="1.9"/></svg>
<div style="left:25px;top:725px;width:17px;height:17px;background:#cdcdcd;"></div>
<div style="left:7px;top:741px;width:949px;height:1px;background:#fff;"></div>
<div style="left:955px;top:531px;width:1px;height:211px;background:#fff;"></div>
<div style="left:659px;top:477px;width:64px;height:42px;border:5px solid #ed1c24"></div>
<div style="left:815px;top:514px;width:119px;height:132px;border:5px solid #ed1c24"></div>
<span id="t154" class="t" style="top:752px;line-height:14px;left:3px;letter-spacing:-0.109px;">[Ins]Pridať</span>
<span id="t155" class="t" style="top:752px;line-height:14px;left:61px;letter-spacing:-0.020px;">[Ctrl+Enter]Opraviť</span>
<span id="t156" class="t" style="top:752px;line-height:14px;left:165.5px;letter-spacing:-0.033px;">[Ctrl+Del]Zmazať</span>
<span id="t157" class="t" style="top:752px;line-height:14px;left:260px;letter-spacing:-0.208px;">[F4]Vybrať</span>
<span id="t158" class="t" style="top:752px;line-height:14px;left:318.8px;letter-spacing:-0.128px;">[Ctrl+P]Poznámka</span>
<span id="t159" class="t" style="top:752px;line-height:14px;left:418.5px;letter-spacing:-0.391px;">[F6]Ďalšia záložka</span>
<div style="left:1px;top:769px;width:960px;height:1px;background:#fff;"></div>
<div style="left:2px;top:770px;width:959px;height:20px;background:#d7e4f2;"></div>
<span id="t160" class="t" style="top:774px;line-height:14px;font-weight:bold;-webkit-text-stroke:0.3px;left:10px;">1</span>
<span id="t161" class="t" style="top:774px;line-height:14px;left:21px;">-</span>
<div style="left:0px;top:0px;width:963px;height:1px;background:#0585ee;"></div>
<div style="left:0px;top:0px;width:1px;height:792px;background:#0585ee;"></div>
<div style="left:962px;top:0px;width:1px;height:792px;background:#0585ee;"></div>
<div style="left:0px;top:791px;width:963px;height:1px;background:#0585ee;"></div>
<div style="left:961px;top:31px;width:1px;height:373px;background:#fbf5ee;"></div>
<div style="left:961px;top:404px;width:1px;height:387px;background:#aaa29a;"></div>
<div style="left:1px;top:790px;width:961px;height:1px;background:#cfc4b8;"></div>
<div style="left:1px;top:31px;width:1px;height:759px;background:#f8f8f8;"></div>
</div></body></html>
